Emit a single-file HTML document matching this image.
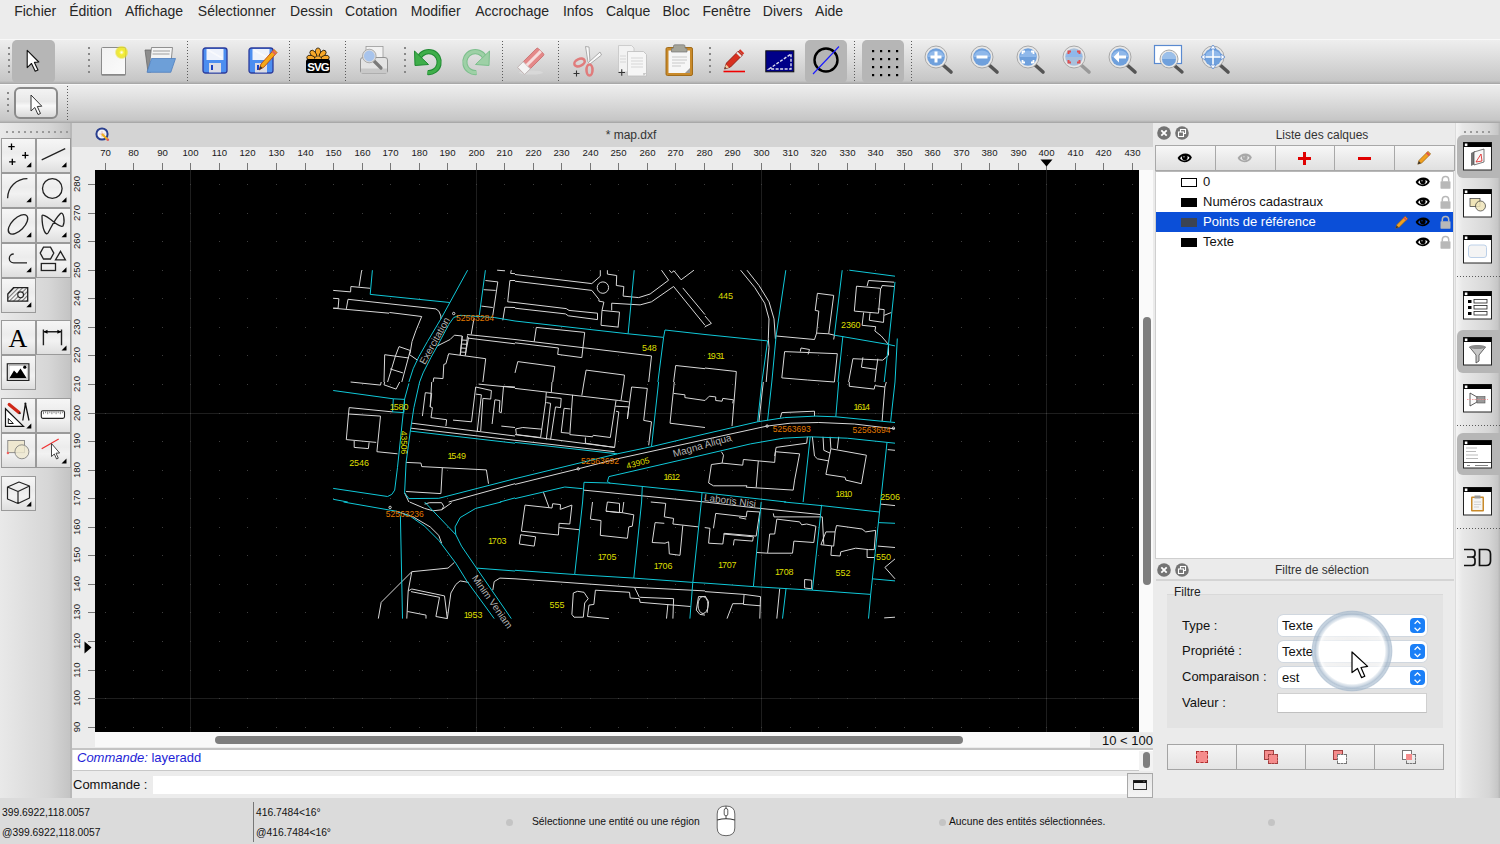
<!DOCTYPE html><html><head><meta charset='utf-8'><style>
*{margin:0;padding:0;box-sizing:border-box}
html,body{width:1500px;height:844px;overflow:hidden;background:#ececec;font-family:"Liberation Sans",sans-serif;color:#222;position:relative}
.a{position:absolute}
.t{position:absolute;white-space:nowrap}
.menu{font-size:14px;top:3px;color:#262626}
.tb{background:linear-gradient(#eeeeee,#e2e2e2 30%,#c6c6c6 95%,#b0b0b0)}
.sepv{position:absolute;width:1px;background:repeating-linear-gradient(#5a5a5a 0 1px,transparent 1px 3px)}
.seph{position:absolute;height:1px;background:repeating-linear-gradient(90deg,#5a5a5a 0 1px,transparent 1px 3px)}
.hdl{position:absolute;width:2px;background:repeating-linear-gradient(#888 0 2px,transparent 2px 6px)}
.hdlh{position:absolute;height:2px;background:repeating-linear-gradient(90deg,#999 0 2px,transparent 2px 6px)}
.chk{position:absolute;background:#b6b6b6;border-radius:5px}
.lb{position:absolute;width:35px;height:35px;border:1px solid #9a9a9a;background:linear-gradient(#f6f6f6,#ececec 40%,#f2f2f2 60%,#dedede)}
.rl{position:absolute;font-size:9.6px;color:#1a1a1a}
svg{position:absolute;overflow:visible}
</style></head><body>
<div class='t menu' style='left:14.2px'>Fichier</div>
<div class='t menu' style='left:69.2px'>Édition</div>
<div class='t menu' style='left:125.0px'>Affichage</div>
<div class='t menu' style='left:197.8px'>Sélectionner</div>
<div class='t menu' style='left:290.1px'>Dessin</div>
<div class='t menu' style='left:345.1px'>Cotation</div>
<div class='t menu' style='left:410.8px'>Modifier</div>
<div class='t menu' style='left:475.2px'>Accrochage</div>
<div class='t menu' style='left:562.9px'>Infos</div>
<div class='t menu' style='left:606.0px'>Calque</div>
<div class='t menu' style='left:662.5px'>Bloc</div>
<div class='t menu' style='left:702.5px'>Fenêtre</div>
<div class='t menu' style='left:762.8px'>Divers</div>
<div class='t menu' style='left:815.1px'>Aide</div>
<div class='a tb' style='left:0;top:39px;width:1500px;height:45px;border-top:1px solid #f8f8f8;border-bottom:1px solid #a9a9a9'></div>
<div class='a tb' style='left:0;top:84px;width:1500px;height:39px;border-top:1px solid #f8f8f8;border-bottom:1px solid #a9a9a9'></div>
<div class='hdl' style='left:8px;top:47px;height:30px'></div>
<div class='hdl' style='left:88px;top:47px;height:30px'></div>
<div class='hdl' style='left:404px;top:47px;height:30px'></div>
<div class='hdl' style='left:709px;top:47px;height:30px'></div>
<div class='sepv' style='left:187px;top:41px;height:40px'></div>
<div class='sepv' style='left:289px;top:41px;height:40px'></div>
<div class='sepv' style='left:345px;top:41px;height:40px'></div>
<div class='sepv' style='left:502px;top:41px;height:40px'></div>
<div class='sepv' style='left:558px;top:41px;height:40px'></div>
<div class='sepv' style='left:854px;top:41px;height:40px'></div>
<div class='sepv' style='left:911px;top:41px;height:40px'></div>
<div class='chk' style='left:12px;top:40px;width:43px;height:43px'></div>
<div class='chk' style='left:805px;top:40px;width:42px;height:43px'></div>
<div class='chk' style='left:862px;top:40px;width:42px;height:43px'></div>
<div class='hdl' style='left:7px;top:92px;height:22px'></div>
<div class='sepv' style='left:67px;top:86px;height:34px'></div>
<div class='a' style='left:14px;top:87px;width:44px;height:32px;border:2px solid #8a8a8a;border-radius:6px;background:linear-gradient(#f3f3f3,#e8e8e8 45%,#f8f8f8 60%,#d9d9d9)'></div>
<svg style='left:20px;top:46px' width='24' height='30' viewBox='0 0 24 30'><path d='M7.2,4.4 L7.2,21.6 L11.5,17.5 L15.2,25.2 L18,24 L14.4,16.4 L18.8,16 Z' fill='#fff' stroke='#111' stroke-width='1.1' stroke-linejoin='round'/></svg><svg style='left:98px;top:44px' width='34' height='36' viewBox='0 0 34 36'><defs><radialGradient id='gl'><stop offset='0' stop-color='#fff'/><stop offset='.35' stop-color='#f4ee30'/><stop offset='.75' stop-color='#e8e020' stop-opacity='.8'/><stop offset='1' stop-color='#e8e020' stop-opacity='0'/></radialGradient><linearGradient id='pg' x1='0' y1='0' x2='1' y2='1'><stop offset='0' stop-color='#f2f2f2'/><stop offset='1' stop-color='#fbfbfb'/></linearGradient></defs><rect x='3.5' y='3.5' width='24' height='27.5' rx='1' fill='url(#pg)' stroke='#8c8c8c' stroke-width='1'/><rect x='3.5' y='30' width='24' height='1.5' fill='#888'/><circle cx='23.6' cy='8.4' r='7' fill='url(#gl)'/></svg><svg style='left:142px;top:44px' width='38' height='32' viewBox='0 0 38 32'><path d='M3,6 L9,6 L9,28 L6,28 Z' fill='#8d8d8d' stroke='#6a6a6a' stroke-width='.8'/><path d='M9.5,3.5 L30.5,3.5 L29,18 L7,26Z' fill='#f4f4f4' stroke='#777' stroke-width='.8'/><path d='M11,7 L28,7 M10.5,10 L27.5,10' stroke='#bbb' stroke-width='1.5'/><path d='M9.5,14.5 L33.5,14.5 L28.8,28.3 L5,28.3 Z' fill='#6d9fd8' stroke='#4f7fbf' stroke-width='.8'/></svg><svg style='left:202px;top:47px' width='26' height='28' viewBox='0 0 26 28'><rect x='1' y='1' width='24' height='25' rx='2.5' fill='#4c8ef0' stroke='#2c3c9c' stroke-width='1.3'/><rect x='4.5' y='2' width='17' height='11' fill='#eef2fb'/><path d='M6,3 L20,11' stroke='#fff' stroke-width='2' opacity='.6'/><rect x='7' y='16' width='12' height='9.5' fill='#dcdce4'/><rect x='9' y='18' width='2' height='5' fill='#1a40c0'/></svg><svg style='left:248px;top:47px' width='30' height='28' viewBox='0 0 30 28'><rect x='1' y='1' width='24' height='25' rx='2.5' fill='#4c8ef0' stroke='#2c3c9c' stroke-width='1.3'/><rect x='4.5' y='2' width='17' height='11' fill='#eef2fb'/><path d='M6,3 L20,11' stroke='#fff' stroke-width='2' opacity='.6'/><rect x='7' y='16' width='12' height='9.5' fill='#dcdce4'/><rect x='9' y='18' width='2' height='5' fill='#1a40c0'/><path d='M11,23 L13,17 L26,2.5 L29,5.5 L16,20 Z' fill='#f4a818' stroke='#c04a10' stroke-width='.9'/><path d='M24.5,4 L27.5,7' stroke='#e06060' stroke-width='2.2'/><path d='M11,23 L12.3,19 L14.6,21Z' fill='#333'/></svg><svg style='left:304px;top:47px' width='28' height='27' viewBox='0 0 28 27'><ellipse cx='14' cy='5.2' rx='2.6' ry='4.2' transform='rotate(0 14 12.5)' fill='#f7a82a' stroke='#000' stroke-width='.7'/><ellipse cx='14' cy='5.2' rx='2.6' ry='4.2' transform='rotate(40 14 12.5)' fill='#f7a82a' stroke='#000' stroke-width='.7'/><ellipse cx='14' cy='5.2' rx='2.6' ry='4.2' transform='rotate(-40 14 12.5)' fill='#f7a82a' stroke='#000' stroke-width='.7'/><ellipse cx='14' cy='5.2' rx='2.6' ry='4.2' transform='rotate(78 14 12.5)' fill='#f7a82a' stroke='#000' stroke-width='.7'/><ellipse cx='14' cy='5.2' rx='2.6' ry='4.2' transform='rotate(-78 14 12.5)' fill='#f7a82a' stroke='#000' stroke-width='.7'/><circle cx='14' cy='12.5' r='3' fill='#f7a82a'/><rect x='2' y='12' width='24' height='14' rx='2.5' fill='#000'/><text x='14' y='23.6' text-anchor='middle' font-family='Liberation Sans' font-weight='bold' font-size='11.5' fill='#fff' letter-spacing='-.9' transform='scale(1 1)'>SVG</text></svg><svg style='left:358px;top:44px' width='32' height='32' viewBox='0 0 32 32'><rect x='8' y='2.5' width='17' height='13' fill='#f2f2f2' stroke='#9a9a9a' stroke-width='.8'/><path d='M2.5,16 Q2.5,13.5 5,13.5 L27,13.5 Q29.5,13.5 29.5,16 L29.5,27 Q29.5,29 27.5,29 L4.5,29 Q2.5,29 2.5,27Z' fill='#e4e4e4' stroke='#8a8a8a' stroke-width='.9'/><rect x='3' y='24.5' width='26' height='4.5' fill='#c8c8c8'/><path d='M15,16 L23,24' stroke='#7a7a7a' stroke-width='3.2' stroke-linecap='round'/><circle cx='11.3' cy='12' r='6.2' fill='#a8c4ec' stroke='#dcdcdc' stroke-width='1.6'/><circle cx='11.3' cy='12' r='6.8' fill='none' stroke='#8a8a8a' stroke-width='.6'/></svg><svg style='left:413px;top:46px' width='32' height='30' viewBox='0 0 32 30'><path d='M6.5,11 A10.5,10.5 0 1 1 14.5,26.5' fill='none' stroke='#1f8a32' stroke-width='5.2'/><path d='M6.5,11 A10.5,10.5 0 1 1 14.5,26.5' fill='none' stroke='#3fae4a' stroke-width='3.2'/><path d='M1.5,5 L2,19.5 L15.5,18.5 Z' fill='#3fae4a' stroke='#1f8a32' stroke-width='1'/></svg><svg style='left:460px;top:46px' width='32' height='30' viewBox='0 0 32 30'><g transform='translate(31,0) scale(-1,1)'><path d='M6.5,11 A10.5,10.5 0 1 1 14.5,26.5' fill='none' stroke='#7cbf8c' stroke-width='5.2'/><path d='M6.5,11 A10.5,10.5 0 1 1 14.5,26.5' fill='none' stroke='#9ed0a6' stroke-width='3.2'/><path d='M1.5,5 L2,19.5 L15.5,18.5 Z' fill='#9ed0a6' stroke='#7cbf8c' stroke-width='1'/></g></svg><svg style='left:514px;top:46px' width='34' height='32' viewBox='0 0 34 32'><ellipse cx='17' cy='26.5' rx='12' ry='2' fill='#d8d8d8'/><g transform='rotate(-45 17 15)'><rect x='3' y='10' width='28' height='10' rx='1.5' fill='#e48888' stroke='#c86a6a' stroke-width='.8'/><rect x='3' y='10' width='8' height='10' fill='#f4f4f4' stroke='#bbb' stroke-width='.8'/><rect x='11' y='13.5' width='20' height='3' fill='#f6dcdc'/></g></svg><svg style='left:570px;top:44px' width='34' height='34' viewBox='0 0 34 34'><path d='M18,18 L15.5,2.5 L19,3 L20,18' fill='#fafafa' stroke='#9a9a9a' stroke-width='.8'/><path d='M18,19 L30,8 L31.5,11 L20,20' fill='#fafafa' stroke='#9a9a9a' stroke-width='.8'/><ellipse cx='9.5' cy='18.5' rx='5.5' ry='3.5' fill='none' stroke='#e07c7c' stroke-width='2.6' transform='rotate(-25 9.5 18.5)'/><ellipse cx='19.5' cy='26' rx='3' ry='5.5' fill='none' stroke='#e07c7c' stroke-width='2.6'/><path d='M3.5,29.5 H9.5 M6.5,26.5 V32.5' stroke='#333' stroke-width='1.1'/></svg><svg style='left:616px;top:44px' width='34' height='34' viewBox='0 0 34 34'><path d='M2.5,1.5 H15.5 L18,4 V28 H2.5Z' fill='#f2f2f2' stroke='#c4c4c4' stroke-width='.8'/><path d='M11.5,7.5 H27.5 L30.5,10.5 V32 L27.5,32 H11.5Z' fill='#f6f6f6' stroke='#bdbdbd' stroke-width='.8'/><path d='M15,14 H27 M15,17 H27 M15,20 H27 M15,23 H27' stroke='#d6d6d6' stroke-width='1'/><path d='M4,12 H10 M4,15 H10 M4,18 H10' stroke='#d6d6d6' stroke-width='1'/><path d='M27.5,32 L30.5,29 L27,29Z' fill='#c8c8c8'/><path d='M2.5,28.5 H9 M5.75,25.25 V31.75' stroke='#333' stroke-width='1.1'/></svg><svg style='left:664px;top:44px' width='30' height='34' viewBox='0 0 30 34'><rect x='2' y='3.5' width='26.5' height='28' rx='1.5' fill='#c98a2a' stroke='#9c6410' stroke-width='.9'/><path d='M4.5,6.5 H26 V29 H4.5Z' fill='#f6f6f6'/><path d='M8,13 H23 M8,16 H23 M8,19 H21 M8,22 H17' stroke='#c8c8c8' stroke-width='1'/><path d='M21,29 L26,24 L26,29Z' fill='#9a9a9a'/><path d='M9.5,2 Q9.5,0.8 11,0.8 H19.5 Q21,0.8 21,2 V4 L23,4.5 V8 H7.5 V4.5 L9.5,4Z' fill='#a4a49a' stroke='#777' stroke-width='.7'/></svg><svg style='left:720px;top:48px' width='28' height='28' viewBox='0 0 28 28'><path d='M3.5,23.5 H25' stroke='#f00000' stroke-width='1.6'/><path d='M4.5,21 L6.5,15 L18.5,3 L22.5,7 L10.5,19 Z' fill='#d83020' stroke='#8a1a10' stroke-width='.9'/><path d='M17,4.5 L21,8.5' stroke='#e8e8e8' stroke-width='2'/><path d='M19.5,2 L23.5,6' stroke='#d83020' stroke-width='2'/><path d='M4.5,21 L6,16.5 L9,19.5Z' fill='#f0d0a0'/><path d='M4.5,21 L5.2,19 L6.5,20.3Z' fill='#222'/></svg><svg style='left:765px;top:50px' width='30' height='23' viewBox='0 0 30 23'><rect x='0.8' y='0.8' width='28' height='21' fill='#000088' stroke='#111' stroke-width='1'/><path d='M4,19 L26,4 L26,19 Z' fill='none' stroke='#e0e0f0' stroke-width='1.4' stroke-dasharray='3,1.5'/></svg><svg style='left:810px;top:44px' width='32' height='32' viewBox='0 0 32 32'><circle cx='16' cy='16' r='11.5' fill='none' stroke='#000' stroke-width='2.4'/><path d='M3,30 L29,2.5' stroke='#1a1aff' stroke-width='1.1'/></svg><svg style='left:870px;top:48px' width='30' height='30' viewBox='0 0 30 30'><rect x='2' y='2' width='2.2' height='2.2' fill='#000'/><rect x='2' y='10' width='2.2' height='2.2' fill='#000'/><rect x='2' y='18' width='2.2' height='2.2' fill='#000'/><rect x='2' y='26' width='2.2' height='2.2' fill='#000'/><rect x='10' y='2' width='2.2' height='2.2' fill='#000'/><rect x='10' y='10' width='2.2' height='2.2' fill='#000'/><rect x='10' y='18' width='2.2' height='2.2' fill='#000'/><rect x='10' y='26' width='2.2' height='2.2' fill='#000'/><rect x='18' y='2' width='2.2' height='2.2' fill='#000'/><rect x='18' y='10' width='2.2' height='2.2' fill='#000'/><rect x='18' y='18' width='2.2' height='2.2' fill='#000'/><rect x='18' y='26' width='2.2' height='2.2' fill='#000'/><rect x='26' y='2' width='2.2' height='2.2' fill='#000'/><rect x='26' y='10' width='2.2' height='2.2' fill='#000'/><rect x='26' y='18' width='2.2' height='2.2' fill='#000'/><rect x='26' y='26' width='2.2' height='2.2' fill='#000'/></svg><svg style='left:0px;top:0px' width='1500' height='100' viewBox='0 0 1500 100'><g><path d='M942,64 L951,72' stroke='#555' stroke-width='3.6' stroke-linecap='round'/><circle cx='936' cy='57' r='11' fill='#e8e8e8' stroke='#a8a8a8' stroke-width='1'/><circle cx='936' cy='57' r='8.8' fill='#6fa0dc'/><path d='M927.5,57 A8.8,8.8 0 0 1 944.5,57' fill='#8fb8ea'/><path d='M930.5,57 H941.5 M936,51.5 V62.5' stroke='#fff' stroke-width='3'/></g><g><path d='M988,64 L997,72' stroke='#555' stroke-width='3.6' stroke-linecap='round'/><circle cx='982' cy='57' r='11' fill='#e8e8e8' stroke='#a8a8a8' stroke-width='1'/><circle cx='982' cy='57' r='8.8' fill='#6fa0dc'/><path d='M973.5,57 A8.8,8.8 0 0 1 990.5,57' fill='#8fb8ea'/><path d='M976.5,57 H987.5' stroke='#fff' stroke-width='3'/></g><g><path d='M1034,64 L1043,72' stroke='#555' stroke-width='3.6' stroke-linecap='round'/><circle cx='1028' cy='57' r='11' fill='#e8e8e8' stroke='#a8a8a8' stroke-width='1'/><circle cx='1028' cy='57' r='8.8' fill='#6fa0dc'/><path d='M1019.5,57 A8.8,8.8 0 0 1 1036.5,57' fill='#8fb8ea'/><path d='M1022.5,54 V51.5 H1025 M1031,51.5 H1033.5 V54 M1033.5,60 V62.5 H1031 M1025,62.5 H1022.5 V60' fill='none' stroke='#fff' stroke-width='1.8'/></g><g><path d='M1080,64 L1089,72' stroke='#999' stroke-width='3.6' stroke-linecap='round'/><circle cx='1074' cy='57' r='11' fill='#e8e8e8' stroke='#a8a8a8' stroke-width='1'/><circle cx='1074' cy='57' r='8.8' fill='#a8c0dc'/><path d='M1065.5,57 A8.8,8.8 0 0 1 1082.5,57' fill='#8fb8ea'/><path d='M1068.5,54 V51.5 H1071 M1077,51.5 H1079.5 V54 M1079.5,60 V62.5 H1077 M1071,62.5 H1068.5 V60' fill='none' stroke='#e05050' stroke-width='2'/></g><g><path d='M1126,64 L1135,72' stroke='#555' stroke-width='3.6' stroke-linecap='round'/><circle cx='1120' cy='57' r='11' fill='#e8e8e8' stroke='#a8a8a8' stroke-width='1'/><circle cx='1120' cy='57' r='8.8' fill='#6fa0dc'/><path d='M1111.5,57 A8.8,8.8 0 0 1 1128.5,57' fill='#8fb8ea'/><path d='M1126,57 H1118' stroke='#fff' stroke-width='3'/><path d='M1113.5,57 L1119,51.5 L1119,62.5Z' fill='#fff'/></g><rect x='1154.5' y='45.5' width='27' height='18' fill='#fff' stroke='#5a8ad0' stroke-width='1.2'/><path d='M1175,66 L1182,72' stroke='#555' stroke-width='3.4' stroke-linecap='round'/><circle cx='1169' cy='59' r='9' fill='#e8e8e8' stroke='#a8a8a8' stroke-width='1'/><circle cx='1169' cy='59' r='7' fill='#6fa0dc'/><path d='M1162,59 A7,7 0 0 1 1176,59' fill='#9cc0ea'/><g><path d='M1219,64 L1228,72' stroke='#555' stroke-width='3.6' stroke-linecap='round'/><circle cx='1213' cy='57' r='11' fill='#e8e8e8' stroke='#a8a8a8' stroke-width='1'/><circle cx='1213' cy='57' r='8.8' fill='#6fa0dc'/><path d='M1204.5,57 A8.8,8.8 0 0 1 1221.5,57' fill='#8fb8ea'/><path d='M1204,57 H1222 M1213,48 V66' stroke='#fff' stroke-width='1.6'/><path d='M1213,45 L1210,49 H1216Z M1213,69 L1210,65 H1216Z M1201,57 L1205,54 V60Z M1225,57 L1221,54 V60Z' fill='#fff' stroke='#5a8ad0' stroke-width='.8'/></g></svg><svg style='left:26px;top:92px' width='20' height='26' viewBox='0 0 20 26'><path d='M5,3 L5,19 L8.8,15.5 L12,22.5 L14.5,21.5 L11.3,14.5 L15.8,14.2 Z' fill='#fff' stroke='#333' stroke-width='1' stroke-linejoin='round'/></svg>
<div class='a' style='left:0;top:123px;width:72px;height:675px;background:linear-gradient(90deg,#e9e9e9,#d6d6d6 70%,#c4c4c4);border-right:2px solid #b8b8b8'></div>
<div class='hdlh' style='left:6px;top:131px;width:62px'></div>
<div class='lb' style='left:1px;top:138px'></div>
<div class='lb' style='left:36px;top:138px'></div>
<div class='lb' style='left:1px;top:173px'></div>
<div class='lb' style='left:36px;top:173px'></div>
<div class='lb' style='left:1px;top:208px'></div>
<div class='lb' style='left:36px;top:208px'></div>
<div class='lb' style='left:1px;top:243px'></div>
<div class='lb' style='left:36px;top:243px'></div>
<div class='lb' style='left:1px;top:278px'></div>
<div class='lb' style='left:1px;top:320px'></div>
<div class='lb' style='left:36px;top:320px'></div>
<div class='lb' style='left:1px;top:355px'></div>
<div class='lb' style='left:1px;top:398px'></div>
<div class='lb' style='left:36px;top:398px'></div>
<div class='lb' style='left:1px;top:433px'></div>
<div class='lb' style='left:36px;top:433px'></div>
<div class='lb' style='left:1px;top:476px'></div>
<svg style='left:0px;top:0px' width='80' height='520' viewBox='0 0 80 520'><path d='M8.3,146.7 H14.7 M11.5,143.5 V149.89999999999998' stroke='#000' stroke-width='1.3'/><path d='M22.1,155.3 H28.5 M25.3,152.10000000000002 V158.5' stroke='#000' stroke-width='1.3'/><path d='M9.100000000000001,161.9 H15.5 M12.3,158.70000000000002 V165.1' stroke='#000' stroke-width='1.3'/><path d='M41.7,159.8 L65.2,148.7' stroke='#222' stroke-width='1.3'/><path d='M7.6,198.2 A19.8,19.8 0 0 1 27.4,178.6' stroke='#222' fill='none' stroke-width='1.3'/><circle cx='52.3' cy='188.5' r='9.8' stroke='#222' fill='none' stroke-width='1.3'/><ellipse cx='18' cy='224.3' rx='12.3' ry='6.2' transform='rotate(-45 18 224.3)' stroke='#222' fill='none' stroke-width='1.3'/><path d='M42,216 C42,230 46,236 48,233 C51,228 54,220 60,214 C64,210 65,222 63,226 C60,228 54,222 50,219 C46,216 42,214 42,216Z' stroke='#222' fill='none' stroke-width='1.3'/><path d='M13.7,254 A4.3,4.3 0 0 0 13.7,262.8 H27' stroke='#222' fill='none' stroke-width='1.3'/><path d='M43.5,247.2 H50.5 L53.8,253.1 L50.5,259 H43.5 L40.2,253.1 Z' stroke='#222' fill='none' stroke-width='1.3'/><path d='M55.5,259.9 H65.4 L60.5,251.4 Z' stroke='#222' fill='none' stroke-width='1.3'/><rect x='41.3' y='263.5' width='14.2' height='7' stroke='#222' fill='none' stroke-width='1.3'/><defs><pattern id='hp' width='3' height='3' patternUnits='userSpaceOnUse' patternTransform='rotate(45)'><rect width='1' height='3' fill='#777'/></pattern></defs><path d='M7.8,294 L13.5,287.7 H27.7 V301.2 H7.8 Z' fill='url(#hp)' stroke='#222' stroke-width='1.3'/><circle cx='20.6' cy='294.8' r='2.9' fill='#f0f0f0' stroke='#222' stroke-width='1.1'/><text x='17.8' y='346.8' text-anchor='middle' font-family='Liberation Serif' font-size='26' fill='#000'>A</text><path d='M43.4,329.5 V345.3 M61.5,329.5 V345.3 M43.4,331.8 H61.5' stroke='#222' stroke-width='1.4'/><path d='M43.6,331.8 L47.5,329.8 V333.8Z M61.3,331.8 L57.4,329.8 V333.8Z' fill='#000'/><rect x='7.3' y='363.8' width='21.6' height='16.6' fill='#fff' stroke='#222' stroke-width='1.2'/><rect x='9' y='365.5' width='18.2' height='13.2' fill='none' stroke='#999' stroke-width='.6'/><path d='M9.5,378 L14,370.5 L17,373.5 L20.5,368.5 L26.5,378Z' fill='#000'/><circle cx='24.8' cy='367.2' r='1.6' fill='#000'/><path d='M5.5,408.7 V426.3 H23.5 Z' fill='#fff' stroke='#111' stroke-width='1.2'/><path d='M8.3,418.5 V423.5 H13.3Z' fill='none' stroke='#111' stroke-width='1'/><path d='M9.2,404.5 L19,412.5' stroke='#d02818' stroke-width='3.2' stroke-linecap='round'/><path d='M19,412.5 L20.5,413.8' stroke='#222' stroke-width='1.5'/><path d='M22.8,420.5 L25.4,403.5 L29,420.5' fill='none' stroke='#111' stroke-width='1.3'/><circle cx='25.4' cy='403.5' r='1' fill='#111'/><rect x='41.3' y='410.8' width='23.2' height='7.6' rx='1.6' fill='#fff' stroke='#222' stroke-width='1.1'/><path d='M43.5,411.5 V414.2M45.6,411.5 V413.2M47.7,411.5 V414.2M49.8,411.5 V413.2M51.9,411.5 V414.2M54.0,411.5 V413.2M56.1,411.5 V414.2M58.2,411.5 V413.2M60.3,411.5 V414.2M62.4,411.5 V413.2' stroke='#333' stroke-width='.6'/><rect x='7.8' y='440.4' width='16.7' height='12.3' fill='#efe8d0' stroke='#777' stroke-width='.8'/><circle cx='21.9' cy='451.8' r='7' fill='#efe8d0' fill-opacity='.8' stroke='#777' stroke-width='.8'/><circle cx='7.9' cy='453' r='1.2' fill='#f06060'/><path d='M41.7,448.8 L58.7,439' stroke='#f03030' stroke-width='1.2'/><path d='M51.5,443.5 V456.5 L54.3,454 L56.6,459 L58.3,458.2 L56,453.2 L59.6,453 Z' fill='#fff' stroke='#333' stroke-width='.9' stroke-linejoin='round'/><path d='M7.5,487 L19,482 L29.5,486 L29.5,498 L18,503.5 L7.5,499 Z M7.5,487 L18,491.5 L29.5,486 M18,491.5 V503.5' fill='none' stroke='#222' stroke-width='1.2' stroke-linejoin='round'/><path d='M26.3,167.3 L31.3,162.3 L31.3,167.3Z' fill='#000'/><path d='M61.5,167.3 L66.5,162.3 L66.5,167.3Z' fill='#000'/><path d='M26.3,202.3 L31.3,197.3 L31.3,202.3Z' fill='#000'/><path d='M61.5,202.3 L66.5,197.3 L66.5,202.3Z' fill='#000'/><path d='M26.3,237.3 L31.3,232.3 L31.3,237.3Z' fill='#000'/><path d='M61.5,237.3 L66.5,232.3 L66.5,237.3Z' fill='#000'/><path d='M26.3,272.3 L31.3,267.3 L31.3,272.3Z' fill='#000'/><path d='M61.5,272.3 L66.5,267.3 L66.5,272.3Z' fill='#000'/><path d='M26.3,307.3 L31.3,302.3 L31.3,307.3Z' fill='#000'/><path d='M61.5,350.5 L66.5,345.5 L66.5,350.5Z' fill='#000'/><path d='M26.3,428.5 L31.3,423.5 L31.3,428.5Z' fill='#000'/><path d='M61.5,463.5 L66.5,458.5 L66.5,463.5Z' fill='#000'/><path d='M26.3,506.5 L31.3,501.5 L31.3,506.5Z' fill='#000'/></svg>
<div class='a' style='left:72px;top:123px;width:1081px;height:24px;background:#d4d4d4'></div>
<svg style='left:95px;top:127px' width='15' height='15' viewBox='0 0 15 15'><circle cx='7' cy='7' r='5.6' fill='#f4f4f4' stroke='#2a3f8f' stroke-width='2'/><path d='M4,7 H10 M7,4 V10' stroke='#d88' stroke-width='.5'/><path d='M7,7 L12.5,12.5' stroke='#f0b020' stroke-width='2.2'/><circle cx='12.8' cy='12.8' r='1.3' fill='#e06060'/></svg>
<div class='t' style='left:72px;width:1118px;top:128px;text-align:center;font-size:12px;color:#333'>* map.dxf</div>
<div class='a' style='left:72px;top:147px;width:1081px;height:601px;background:#ececec'></div>
<div class='a' style='left:95px;top:170px;width:1044px;height:562px;background:#000'></div>
<svg class='a' style='left:0;top:0' width='1500' height='844' viewBox='0 0 1500 844'><defs><clipPath id='cv'><rect x='95' y='170' width='1044' height='562'/></clipPath></defs><g clip-path='url(#cv)'><line x1='190.5' y1='170' x2='190.5' y2='732' stroke='#1e1e1e' stroke-width='1'/><line x1='476.5' y1='170' x2='476.5' y2='732' stroke='#1e1e1e' stroke-width='1'/><line x1='761.5' y1='170' x2='761.5' y2='732' stroke='#1e1e1e' stroke-width='1'/><line x1='1046.5' y1='170' x2='1046.5' y2='732' stroke='#1e1e1e' stroke-width='1'/><line x1='95' y1='698.5' x2='1139' y2='698.5' stroke='#1e1e1e' stroke-width='1'/><line x1='95' y1='413.5' x2='1139' y2='413.5' stroke='#1e1e1e' stroke-width='1'/><path d='M105,727h1v1h-1zM105,698h1v1h-1zM105,670h1v1h-1zM105,641h1v1h-1zM105,612h1v1h-1zM105,584h1v1h-1zM105,555h1v1h-1zM105,527h1v1h-1zM105,498h1v1h-1zM105,470h1v1h-1zM105,441h1v1h-1zM105,413h1v1h-1zM105,384h1v1h-1zM105,355h1v1h-1zM105,327h1v1h-1zM105,298h1v1h-1zM105,270h1v1h-1zM105,241h1v1h-1zM105,213h1v1h-1zM105,184h1v1h-1zM133,727h1v1h-1zM133,698h1v1h-1zM133,670h1v1h-1zM133,641h1v1h-1zM133,612h1v1h-1zM133,584h1v1h-1zM133,555h1v1h-1zM133,527h1v1h-1zM133,498h1v1h-1zM133,470h1v1h-1zM133,441h1v1h-1zM133,413h1v1h-1zM133,384h1v1h-1zM133,355h1v1h-1zM133,327h1v1h-1zM133,298h1v1h-1zM133,270h1v1h-1zM133,241h1v1h-1zM133,213h1v1h-1zM133,184h1v1h-1zM162,727h1v1h-1zM162,698h1v1h-1zM162,670h1v1h-1zM162,641h1v1h-1zM162,612h1v1h-1zM162,584h1v1h-1zM162,555h1v1h-1zM162,527h1v1h-1zM162,498h1v1h-1zM162,470h1v1h-1zM162,441h1v1h-1zM162,413h1v1h-1zM162,384h1v1h-1zM162,355h1v1h-1zM162,327h1v1h-1zM162,298h1v1h-1zM162,270h1v1h-1zM162,241h1v1h-1zM162,213h1v1h-1zM162,184h1v1h-1zM190,727h1v1h-1zM190,698h1v1h-1zM190,670h1v1h-1zM190,641h1v1h-1zM190,612h1v1h-1zM190,584h1v1h-1zM190,555h1v1h-1zM190,527h1v1h-1zM190,498h1v1h-1zM190,470h1v1h-1zM190,441h1v1h-1zM190,413h1v1h-1zM190,384h1v1h-1zM190,355h1v1h-1zM190,327h1v1h-1zM190,298h1v1h-1zM190,270h1v1h-1zM190,241h1v1h-1zM190,213h1v1h-1zM190,184h1v1h-1zM219,727h1v1h-1zM219,698h1v1h-1zM219,670h1v1h-1zM219,641h1v1h-1zM219,612h1v1h-1zM219,584h1v1h-1zM219,555h1v1h-1zM219,527h1v1h-1zM219,498h1v1h-1zM219,470h1v1h-1zM219,441h1v1h-1zM219,413h1v1h-1zM219,384h1v1h-1zM219,355h1v1h-1zM219,327h1v1h-1zM219,298h1v1h-1zM219,270h1v1h-1zM219,241h1v1h-1zM219,213h1v1h-1zM219,184h1v1h-1zM247,727h1v1h-1zM247,698h1v1h-1zM247,670h1v1h-1zM247,641h1v1h-1zM247,612h1v1h-1zM247,584h1v1h-1zM247,555h1v1h-1zM247,527h1v1h-1zM247,498h1v1h-1zM247,470h1v1h-1zM247,441h1v1h-1zM247,413h1v1h-1zM247,384h1v1h-1zM247,355h1v1h-1zM247,327h1v1h-1zM247,298h1v1h-1zM247,270h1v1h-1zM247,241h1v1h-1zM247,213h1v1h-1zM247,184h1v1h-1zM276,727h1v1h-1zM276,698h1v1h-1zM276,670h1v1h-1zM276,641h1v1h-1zM276,612h1v1h-1zM276,584h1v1h-1zM276,555h1v1h-1zM276,527h1v1h-1zM276,498h1v1h-1zM276,470h1v1h-1zM276,441h1v1h-1zM276,413h1v1h-1zM276,384h1v1h-1zM276,355h1v1h-1zM276,327h1v1h-1zM276,298h1v1h-1zM276,270h1v1h-1zM276,241h1v1h-1zM276,213h1v1h-1zM276,184h1v1h-1zM305,727h1v1h-1zM305,698h1v1h-1zM305,670h1v1h-1zM305,641h1v1h-1zM305,612h1v1h-1zM305,584h1v1h-1zM305,555h1v1h-1zM305,527h1v1h-1zM305,498h1v1h-1zM305,470h1v1h-1zM305,441h1v1h-1zM305,413h1v1h-1zM305,384h1v1h-1zM305,355h1v1h-1zM305,327h1v1h-1zM305,298h1v1h-1zM305,270h1v1h-1zM305,241h1v1h-1zM305,213h1v1h-1zM305,184h1v1h-1zM333,727h1v1h-1zM333,698h1v1h-1zM333,670h1v1h-1zM333,641h1v1h-1zM333,612h1v1h-1zM333,584h1v1h-1zM333,555h1v1h-1zM333,527h1v1h-1zM333,498h1v1h-1zM333,470h1v1h-1zM333,441h1v1h-1zM333,413h1v1h-1zM333,384h1v1h-1zM333,355h1v1h-1zM333,327h1v1h-1zM333,298h1v1h-1zM333,270h1v1h-1zM333,241h1v1h-1zM333,213h1v1h-1zM333,184h1v1h-1zM362,727h1v1h-1zM362,698h1v1h-1zM362,670h1v1h-1zM362,641h1v1h-1zM362,612h1v1h-1zM362,584h1v1h-1zM362,555h1v1h-1zM362,527h1v1h-1zM362,498h1v1h-1zM362,470h1v1h-1zM362,441h1v1h-1zM362,413h1v1h-1zM362,384h1v1h-1zM362,355h1v1h-1zM362,327h1v1h-1zM362,298h1v1h-1zM362,270h1v1h-1zM362,241h1v1h-1zM362,213h1v1h-1zM362,184h1v1h-1zM390,727h1v1h-1zM390,698h1v1h-1zM390,670h1v1h-1zM390,641h1v1h-1zM390,612h1v1h-1zM390,584h1v1h-1zM390,555h1v1h-1zM390,527h1v1h-1zM390,498h1v1h-1zM390,470h1v1h-1zM390,441h1v1h-1zM390,413h1v1h-1zM390,384h1v1h-1zM390,355h1v1h-1zM390,327h1v1h-1zM390,298h1v1h-1zM390,270h1v1h-1zM390,241h1v1h-1zM390,213h1v1h-1zM390,184h1v1h-1zM419,727h1v1h-1zM419,698h1v1h-1zM419,670h1v1h-1zM419,641h1v1h-1zM419,612h1v1h-1zM419,584h1v1h-1zM419,555h1v1h-1zM419,527h1v1h-1zM419,498h1v1h-1zM419,470h1v1h-1zM419,441h1v1h-1zM419,413h1v1h-1zM419,384h1v1h-1zM419,355h1v1h-1zM419,327h1v1h-1zM419,298h1v1h-1zM419,270h1v1h-1zM419,241h1v1h-1zM419,213h1v1h-1zM419,184h1v1h-1zM447,727h1v1h-1zM447,698h1v1h-1zM447,670h1v1h-1zM447,641h1v1h-1zM447,612h1v1h-1zM447,584h1v1h-1zM447,555h1v1h-1zM447,527h1v1h-1zM447,498h1v1h-1zM447,470h1v1h-1zM447,441h1v1h-1zM447,413h1v1h-1zM447,384h1v1h-1zM447,355h1v1h-1zM447,327h1v1h-1zM447,298h1v1h-1zM447,270h1v1h-1zM447,241h1v1h-1zM447,213h1v1h-1zM447,184h1v1h-1zM476,727h1v1h-1zM476,698h1v1h-1zM476,670h1v1h-1zM476,641h1v1h-1zM476,612h1v1h-1zM476,584h1v1h-1zM476,555h1v1h-1zM476,527h1v1h-1zM476,498h1v1h-1zM476,470h1v1h-1zM476,441h1v1h-1zM476,413h1v1h-1zM476,384h1v1h-1zM476,355h1v1h-1zM476,327h1v1h-1zM476,298h1v1h-1zM476,270h1v1h-1zM476,241h1v1h-1zM476,213h1v1h-1zM476,184h1v1h-1zM504,727h1v1h-1zM504,698h1v1h-1zM504,670h1v1h-1zM504,641h1v1h-1zM504,612h1v1h-1zM504,584h1v1h-1zM504,555h1v1h-1zM504,527h1v1h-1zM504,498h1v1h-1zM504,470h1v1h-1zM504,441h1v1h-1zM504,413h1v1h-1zM504,384h1v1h-1zM504,355h1v1h-1zM504,327h1v1h-1zM504,298h1v1h-1zM504,270h1v1h-1zM504,241h1v1h-1zM504,213h1v1h-1zM504,184h1v1h-1zM533,727h1v1h-1zM533,698h1v1h-1zM533,670h1v1h-1zM533,641h1v1h-1zM533,612h1v1h-1zM533,584h1v1h-1zM533,555h1v1h-1zM533,527h1v1h-1zM533,498h1v1h-1zM533,470h1v1h-1zM533,441h1v1h-1zM533,413h1v1h-1zM533,384h1v1h-1zM533,355h1v1h-1zM533,327h1v1h-1zM533,298h1v1h-1zM533,270h1v1h-1zM533,241h1v1h-1zM533,213h1v1h-1zM533,184h1v1h-1zM561,727h1v1h-1zM561,698h1v1h-1zM561,670h1v1h-1zM561,641h1v1h-1zM561,612h1v1h-1zM561,584h1v1h-1zM561,555h1v1h-1zM561,527h1v1h-1zM561,498h1v1h-1zM561,470h1v1h-1zM561,441h1v1h-1zM561,413h1v1h-1zM561,384h1v1h-1zM561,355h1v1h-1zM561,327h1v1h-1zM561,298h1v1h-1zM561,270h1v1h-1zM561,241h1v1h-1zM561,213h1v1h-1zM561,184h1v1h-1zM590,727h1v1h-1zM590,698h1v1h-1zM590,670h1v1h-1zM590,641h1v1h-1zM590,612h1v1h-1zM590,584h1v1h-1zM590,555h1v1h-1zM590,527h1v1h-1zM590,498h1v1h-1zM590,470h1v1h-1zM590,441h1v1h-1zM590,413h1v1h-1zM590,384h1v1h-1zM590,355h1v1h-1zM590,327h1v1h-1zM590,298h1v1h-1zM590,270h1v1h-1zM590,241h1v1h-1zM590,213h1v1h-1zM590,184h1v1h-1zM618,727h1v1h-1zM618,698h1v1h-1zM618,670h1v1h-1zM618,641h1v1h-1zM618,612h1v1h-1zM618,584h1v1h-1zM618,555h1v1h-1zM618,527h1v1h-1zM618,498h1v1h-1zM618,470h1v1h-1zM618,441h1v1h-1zM618,413h1v1h-1zM618,384h1v1h-1zM618,355h1v1h-1zM618,327h1v1h-1zM618,298h1v1h-1zM618,270h1v1h-1zM618,241h1v1h-1zM618,213h1v1h-1zM618,184h1v1h-1zM647,727h1v1h-1zM647,698h1v1h-1zM647,670h1v1h-1zM647,641h1v1h-1zM647,612h1v1h-1zM647,584h1v1h-1zM647,555h1v1h-1zM647,527h1v1h-1zM647,498h1v1h-1zM647,470h1v1h-1zM647,441h1v1h-1zM647,413h1v1h-1zM647,384h1v1h-1zM647,355h1v1h-1zM647,327h1v1h-1zM647,298h1v1h-1zM647,270h1v1h-1zM647,241h1v1h-1zM647,213h1v1h-1zM647,184h1v1h-1zM675,727h1v1h-1zM675,698h1v1h-1zM675,670h1v1h-1zM675,641h1v1h-1zM675,612h1v1h-1zM675,584h1v1h-1zM675,555h1v1h-1zM675,527h1v1h-1zM675,498h1v1h-1zM675,470h1v1h-1zM675,441h1v1h-1zM675,413h1v1h-1zM675,384h1v1h-1zM675,355h1v1h-1zM675,327h1v1h-1zM675,298h1v1h-1zM675,270h1v1h-1zM675,241h1v1h-1zM675,213h1v1h-1zM675,184h1v1h-1zM704,727h1v1h-1zM704,698h1v1h-1zM704,670h1v1h-1zM704,641h1v1h-1zM704,612h1v1h-1zM704,584h1v1h-1zM704,555h1v1h-1zM704,527h1v1h-1zM704,498h1v1h-1zM704,470h1v1h-1zM704,441h1v1h-1zM704,413h1v1h-1zM704,384h1v1h-1zM704,355h1v1h-1zM704,327h1v1h-1zM704,298h1v1h-1zM704,270h1v1h-1zM704,241h1v1h-1zM704,213h1v1h-1zM704,184h1v1h-1zM732,727h1v1h-1zM732,698h1v1h-1zM732,670h1v1h-1zM732,641h1v1h-1zM732,612h1v1h-1zM732,584h1v1h-1zM732,555h1v1h-1zM732,527h1v1h-1zM732,498h1v1h-1zM732,470h1v1h-1zM732,441h1v1h-1zM732,413h1v1h-1zM732,384h1v1h-1zM732,355h1v1h-1zM732,327h1v1h-1zM732,298h1v1h-1zM732,270h1v1h-1zM732,241h1v1h-1zM732,213h1v1h-1zM732,184h1v1h-1zM761,727h1v1h-1zM761,698h1v1h-1zM761,670h1v1h-1zM761,641h1v1h-1zM761,612h1v1h-1zM761,584h1v1h-1zM761,555h1v1h-1zM761,527h1v1h-1zM761,498h1v1h-1zM761,470h1v1h-1zM761,441h1v1h-1zM761,413h1v1h-1zM761,384h1v1h-1zM761,355h1v1h-1zM761,327h1v1h-1zM761,298h1v1h-1zM761,270h1v1h-1zM761,241h1v1h-1zM761,213h1v1h-1zM761,184h1v1h-1zM790,727h1v1h-1zM790,698h1v1h-1zM790,670h1v1h-1zM790,641h1v1h-1zM790,612h1v1h-1zM790,584h1v1h-1zM790,555h1v1h-1zM790,527h1v1h-1zM790,498h1v1h-1zM790,470h1v1h-1zM790,441h1v1h-1zM790,413h1v1h-1zM790,384h1v1h-1zM790,355h1v1h-1zM790,327h1v1h-1zM790,298h1v1h-1zM790,270h1v1h-1zM790,241h1v1h-1zM790,213h1v1h-1zM790,184h1v1h-1zM818,727h1v1h-1zM818,698h1v1h-1zM818,670h1v1h-1zM818,641h1v1h-1zM818,612h1v1h-1zM818,584h1v1h-1zM818,555h1v1h-1zM818,527h1v1h-1zM818,498h1v1h-1zM818,470h1v1h-1zM818,441h1v1h-1zM818,413h1v1h-1zM818,384h1v1h-1zM818,355h1v1h-1zM818,327h1v1h-1zM818,298h1v1h-1zM818,270h1v1h-1zM818,241h1v1h-1zM818,213h1v1h-1zM818,184h1v1h-1zM847,727h1v1h-1zM847,698h1v1h-1zM847,670h1v1h-1zM847,641h1v1h-1zM847,612h1v1h-1zM847,584h1v1h-1zM847,555h1v1h-1zM847,527h1v1h-1zM847,498h1v1h-1zM847,470h1v1h-1zM847,441h1v1h-1zM847,413h1v1h-1zM847,384h1v1h-1zM847,355h1v1h-1zM847,327h1v1h-1zM847,298h1v1h-1zM847,270h1v1h-1zM847,241h1v1h-1zM847,213h1v1h-1zM847,184h1v1h-1zM875,727h1v1h-1zM875,698h1v1h-1zM875,670h1v1h-1zM875,641h1v1h-1zM875,612h1v1h-1zM875,584h1v1h-1zM875,555h1v1h-1zM875,527h1v1h-1zM875,498h1v1h-1zM875,470h1v1h-1zM875,441h1v1h-1zM875,413h1v1h-1zM875,384h1v1h-1zM875,355h1v1h-1zM875,327h1v1h-1zM875,298h1v1h-1zM875,270h1v1h-1zM875,241h1v1h-1zM875,213h1v1h-1zM875,184h1v1h-1zM904,727h1v1h-1zM904,698h1v1h-1zM904,670h1v1h-1zM904,641h1v1h-1zM904,612h1v1h-1zM904,584h1v1h-1zM904,555h1v1h-1zM904,527h1v1h-1zM904,498h1v1h-1zM904,470h1v1h-1zM904,441h1v1h-1zM904,413h1v1h-1zM904,384h1v1h-1zM904,355h1v1h-1zM904,327h1v1h-1zM904,298h1v1h-1zM904,270h1v1h-1zM904,241h1v1h-1zM904,213h1v1h-1zM904,184h1v1h-1zM932,727h1v1h-1zM932,698h1v1h-1zM932,670h1v1h-1zM932,641h1v1h-1zM932,612h1v1h-1zM932,584h1v1h-1zM932,555h1v1h-1zM932,527h1v1h-1zM932,498h1v1h-1zM932,470h1v1h-1zM932,441h1v1h-1zM932,413h1v1h-1zM932,384h1v1h-1zM932,355h1v1h-1zM932,327h1v1h-1zM932,298h1v1h-1zM932,270h1v1h-1zM932,241h1v1h-1zM932,213h1v1h-1zM932,184h1v1h-1zM961,727h1v1h-1zM961,698h1v1h-1zM961,670h1v1h-1zM961,641h1v1h-1zM961,612h1v1h-1zM961,584h1v1h-1zM961,555h1v1h-1zM961,527h1v1h-1zM961,498h1v1h-1zM961,470h1v1h-1zM961,441h1v1h-1zM961,413h1v1h-1zM961,384h1v1h-1zM961,355h1v1h-1zM961,327h1v1h-1zM961,298h1v1h-1zM961,270h1v1h-1zM961,241h1v1h-1zM961,213h1v1h-1zM961,184h1v1h-1zM989,727h1v1h-1zM989,698h1v1h-1zM989,670h1v1h-1zM989,641h1v1h-1zM989,612h1v1h-1zM989,584h1v1h-1zM989,555h1v1h-1zM989,527h1v1h-1zM989,498h1v1h-1zM989,470h1v1h-1zM989,441h1v1h-1zM989,413h1v1h-1zM989,384h1v1h-1zM989,355h1v1h-1zM989,327h1v1h-1zM989,298h1v1h-1zM989,270h1v1h-1zM989,241h1v1h-1zM989,213h1v1h-1zM989,184h1v1h-1zM1018,727h1v1h-1zM1018,698h1v1h-1zM1018,670h1v1h-1zM1018,641h1v1h-1zM1018,612h1v1h-1zM1018,584h1v1h-1zM1018,555h1v1h-1zM1018,527h1v1h-1zM1018,498h1v1h-1zM1018,470h1v1h-1zM1018,441h1v1h-1zM1018,413h1v1h-1zM1018,384h1v1h-1zM1018,355h1v1h-1zM1018,327h1v1h-1zM1018,298h1v1h-1zM1018,270h1v1h-1zM1018,241h1v1h-1zM1018,213h1v1h-1zM1018,184h1v1h-1zM1046,727h1v1h-1zM1046,698h1v1h-1zM1046,670h1v1h-1zM1046,641h1v1h-1zM1046,612h1v1h-1zM1046,584h1v1h-1zM1046,555h1v1h-1zM1046,527h1v1h-1zM1046,498h1v1h-1zM1046,470h1v1h-1zM1046,441h1v1h-1zM1046,413h1v1h-1zM1046,384h1v1h-1zM1046,355h1v1h-1zM1046,327h1v1h-1zM1046,298h1v1h-1zM1046,270h1v1h-1zM1046,241h1v1h-1zM1046,213h1v1h-1zM1046,184h1v1h-1zM1075,727h1v1h-1zM1075,698h1v1h-1zM1075,670h1v1h-1zM1075,641h1v1h-1zM1075,612h1v1h-1zM1075,584h1v1h-1zM1075,555h1v1h-1zM1075,527h1v1h-1zM1075,498h1v1h-1zM1075,470h1v1h-1zM1075,441h1v1h-1zM1075,413h1v1h-1zM1075,384h1v1h-1zM1075,355h1v1h-1zM1075,327h1v1h-1zM1075,298h1v1h-1zM1075,270h1v1h-1zM1075,241h1v1h-1zM1075,213h1v1h-1zM1075,184h1v1h-1zM1103,727h1v1h-1zM1103,698h1v1h-1zM1103,670h1v1h-1zM1103,641h1v1h-1zM1103,612h1v1h-1zM1103,584h1v1h-1zM1103,555h1v1h-1zM1103,527h1v1h-1zM1103,498h1v1h-1zM1103,470h1v1h-1zM1103,441h1v1h-1zM1103,413h1v1h-1zM1103,384h1v1h-1zM1103,355h1v1h-1zM1103,327h1v1h-1zM1103,298h1v1h-1zM1103,270h1v1h-1zM1103,241h1v1h-1zM1103,213h1v1h-1zM1103,184h1v1h-1zM1132,727h1v1h-1zM1132,698h1v1h-1zM1132,670h1v1h-1zM1132,641h1v1h-1zM1132,612h1v1h-1zM1132,584h1v1h-1zM1132,555h1v1h-1zM1132,527h1v1h-1zM1132,498h1v1h-1zM1132,470h1v1h-1zM1132,441h1v1h-1zM1132,413h1v1h-1zM1132,384h1v1h-1zM1132,355h1v1h-1zM1132,327h1v1h-1zM1132,298h1v1h-1zM1132,270h1v1h-1zM1132,241h1v1h-1zM1132,213h1v1h-1zM1132,184h1v1h-1z' fill='#3e3e3e'/><g fill='none' stroke='#d8d8d8' stroke-width='1' stroke-linejoin='round'><polyline points='333.2,290.4 350.6,291.9 350.9,286.5 370.2,288.3'/><polyline points='361.7,270.2 359.1,286.5'/><polyline points='333.2,298.3 338.9,298.7 338.1,308.2 333.2,308.2'/><polyline points='333.2,308.2 389.0,313.2 389.7,312.5 421.7,316.5 416.0,330.3 412.0,341.6 410.0,353.7'/><polyline points='346.3,308.9 348.0,299.3 435.9,308.9 438.8,311.1 440.9,316.0 440.9,318.9'/><polyline points='384.0,382.0 384.7,354.7 408.9,358.0'/><polyline points='395.4,356.1 399.0,346.6 410.3,350.5 401.8,382.0'/><polyline points='395.4,356.1 387.6,382.0'/><polyline points='390.1,368.9 402.9,372.9'/><polyline points='408.9,354.2 417.4,360.1'/><polyline points='485.4,280.5 497.8,281.9 492.8,315.3'/><polyline points='483.6,289.7 495.7,290.4'/><polyline points='481.4,306.1 492.8,307.5'/><polyline points='515.0,280.5 509.9,280.5 507.7,301.8 515.0,302.5'/><polyline points='515.0,307.5 504.9,307.2 502.8,320.3'/><polyline points='497.1,270.2 504.9,270.8'/><polyline points='511.3,270.2 510.6,273.4 515.0,273.7'/><polyline points='471.2,334.5 474.0,318.2'/><polyline points='467.2,334.5 515.0,339.5'/><polyline points='467.9,338.1 515.0,343.8'/><polyline points='437.4,345.9 450.1,339.5 454.4,335.2 462.2,336.0 460.1,355.2'/><polyline points='465.1,355.9 468.6,337.4'/><polyline points='433.1,382.0 433.8,377.9 443.0,378.6 443.8,364.4 445.9,363.7 448.7,353.7 485.7,358.7 482.9,382.0'/><polyline points='515.0,274.5 591.8,283.6 600.3,276.2 600.3,270.2'/><polyline points='515.0,281.2 591.8,290.4 598.9,299.3 598.9,301.1 603.9,302.1 602.0,310.4 619.5,312.1 618.1,327.1 601.0,325.3 602.0,310.4'/><polyline points='607.4,270.2 607.4,274.1 616.7,275.5 616.3,285.5 623.8,286.5 623.1,296.1 638.7,297.6 650.1,294.0 668.6,280.2 661.5,270.2'/><polyline points='611.7,310.4 611.7,303.2 640.1,304.9 651.5,301.8 673.6,286.5 705.0,325.3'/><polyline points='693.9,270.2 681.1,279.8 674.0,270.8 671.4,272.7 669.3,270.2'/><polyline points='682.8,287.9 705.0,314.6'/><polyline points='515.0,302.5 566.2,308.6 569.0,310.4 597.5,313.2 597.5,319.6 568.3,315.8 565.5,313.9 515.0,308.2'/><polyline points='534.2,341.6 536.3,327.4 584.7,332.4 581.8,357.6 557.7,354.4 558.4,348.0 515.0,342.8'/><polyline points='515.0,339.5 651.5,355.9 648.7,382.0'/><polyline points='515.0,372.9 517.8,361.6 554.8,366.5 552.7,382.0'/><polyline points='584.0,382.0 586.1,370.1 624.5,375.1 623.8,382.0'/><polyline points='673.6,382.0 675.7,365.5 705.0,368.7'/><polyline points='740.6,270.2 754.8,287.6 764.7,303.2 769.0,318.9 768.3,338.8 769.0,347.3 766.2,382.0'/><polyline points='747.0,270.2 759.0,285.5 769.0,301.8 774.0,318.9 775.4,338.8'/><polyline points='705.0,316.0 711.4,323.4 705.0,326.7'/><polyline points='817.4,293.3 833.7,295.4 828.7,333.8 816.6,333.1 818.8,311.1 815.2,310.4 817.4,293.3'/><polyline points='776.1,336.0 814.5,339.5 816.6,333.1'/><polyline points='828.7,333.8 834.4,335.2 833.7,339.5'/><polyline points='856.5,286.2 880.6,288.3 878.5,313.2 854.3,311.1 856.5,286.2'/><polyline points='867.1,286.2 868.5,280.5 894.1,282.2'/><polyline points='881.3,288.3 882.1,285.5 895.0,286.5'/><polyline points='870.0,313.2 869.3,320.3 883.5,322.4 884.2,309.6 877.8,308.9'/><polyline points='863.6,312.5 862.1,325.3 875.7,326.7 874.9,331.0 881.3,336.0 888.5,344.5'/><polyline points='884.2,315.3 891.3,312.5'/><polyline points='784.6,351.6 837.3,353.7 834.4,382.0'/><polyline points='784.6,351.6 781.8,377.9 807.4,380.0 834.4,382.0'/><polyline points='800.3,351.6 801.0,348.0 809.5,349.5 808.1,354.4'/><polyline points='705.0,368.0 736.3,371.5 735.6,382.0'/><polyline points='848.6,382.0 852.9,358.7 882.8,360.1 888.5,355.2 888.5,344.5'/><polyline points='862.9,357.3 861.4,367.2 876.4,369.4 877.8,358.7'/><polyline points='876.4,369.4 874.9,382.0'/><polyline points='350.6,382.0 380.5,385.1 381.2,382.0'/><polyline points='384.7,382.0 384.0,384.8 396.1,389.1 399.7,382.0'/><polyline points='349.2,407.6 392.6,411.9'/><polyline points='349.2,407.6 348.5,414.0 380.5,416.1 376.9,451.7 397.5,453.8'/><polyline points='348.5,414.0 346.3,439.6 376.2,442.4'/><polyline points='354.2,441.0 354.2,447.4 368.4,448.6 369.1,442.4'/><polyline points='411.8,423.2 515.0,436.0'/><polyline points='411.0,428.2 515.0,440.3'/><polyline points='422.4,416.1 425.3,392.7 431.7,393.4 430.2,406.9 432.4,407.6 431.0,417.6 446.6,419.7'/><polyline points='431.7,382.0 430.2,406.9'/><polyline points='446.6,419.7 445.9,426.1'/><polyline points='453.0,420.1 471.5,421.8 475.7,387.0'/><polyline points='475.7,387.0 491.4,390.5 490.7,399.1 482.9,398.4 480.7,431.1'/><polyline points='475.7,394.1 481.4,394.8 477.2,431.8'/><polyline points='492.1,424.0 494.9,399.8 499.9,400.5 499.2,411.9 501.3,412.6 503.5,386.3 515.0,387.0'/><polyline points='501.3,426.1 515.0,427.5'/><polyline points='478.6,384.1 515.0,387.7'/><polyline points='406.1,462.4 421.0,463.1 421.7,466.6 486.4,469.9 488.5,483.7'/><polyline points='442.3,468.0 440.9,493.6 406.1,491.5'/><polyline points='448.7,502.0 515.0,483.7'/><polyline points='404.6,492.9 408.9,502.0'/><polyline points='515.0,484.4 578.3,468.8 617.4,458.8 705.0,439.6'/><polyline points='515.0,440.3 614.6,451.7'/><polyline points='515.0,388.4 618.8,400.5 628.8,401.9'/><polyline points='552.0,382.0 551.3,392.2'/><polyline points='584.0,382.0 581.8,395.5'/><polyline points='623.8,382.0 621.0,400.5'/><polyline points='546.3,392.2 545.6,401.9 540.6,437.5 516.4,434.6 515.7,428.9 522.8,427.5 542.0,429.2'/><polyline points='546.3,396.9 561.2,398.4 560.5,407.6 555.5,406.9 550.6,439.6'/><polyline points='546.3,402.6 550.6,403.3 546.3,439.6'/><polyline points='572.6,394.8 569.8,434.6 592.5,436.8 593.2,435.3 610.3,437.5 616.0,400.5'/><polyline points='564.1,408.3 570.5,409.0'/><polyline points='564.1,408.3 561.2,432.5 569.0,433.2'/><polyline points='515.0,434.6 614.6,447.4'/><polyline points='616.0,411.2 618.8,411.9 614.6,447.4'/><polyline points='615.3,406.2 628.8,406.9 627.4,419.0'/><polyline points='631.6,387.0 647.3,388.4 643.7,420.4 651.5,421.8 648.7,445.3'/><polyline points='631.6,387.0 627.4,419.0'/><polyline points='674.3,382.0 670.0,423.2 705.0,427.5'/><polyline points='673.6,393.4 684.9,394.8 684.9,397.6 705.0,400.5'/><polyline points='585.4,437.5 585.4,443.2 614.6,447.4'/><polyline points='543.4,492.2 547.0,502.0'/><polyline points='583.3,490.1 705.0,502.0'/><polyline points='705.0,439.6 766.9,426.1 790.3,423.2 818.8,422.5 854.3,424.0 895.0,428.9'/><polyline points='705.0,400.5 709.3,396.2 715.7,396.9 715.7,400.5 722.1,401.2 722.8,398.4 733.4,399.8 732.7,403.3'/><polyline points='735.6,382.0 732.0,426.1'/><polyline points='763.3,382.0 759.0,421.1'/><polyline points='780.4,417.6 781.8,412.6 814.5,411.2 814.5,416.1'/><polyline points='849.3,382.0 849.3,386.3 874.2,389.1 874.9,385.6 884.9,387.0 886.3,382.0'/><polyline points='884.9,387.0 882.1,421.1'/><polyline points='721.4,451.7 723.5,455.2 722.1,463.1 711.4,464.5 708.6,483.0 713.5,485.8 747.0,485.8 746.2,487.2 793.2,490.1 794.6,480.1 799.6,453.8 775.4,451.7 774.7,462.4 743.4,459.5 742.7,465.2 722.1,463.1'/><polyline points='758.3,460.9 756.2,487.2'/><polyline points='774.7,456.0 776.1,447.4 806.7,443.2 807.4,436.8'/><polyline points='812.4,436.8 814.5,456.0 817.4,458.8 828.7,460.9'/><polyline points='823.0,436.8 823.8,450.3 830.1,453.1'/><polyline points='830.1,436.8 830.9,448.8'/><polyline points='838.7,436.8 837.3,448.8'/><polyline points='830.9,448.8 866.4,455.2 861.4,483.7 845.8,480.1 845.1,477.3 825.9,474.4 830.9,448.8'/><polyline points='887.7,449.6 895.0,450.3'/><polyline points='409.6,502.0 424.6,508.4 433.1,510.8 441.6,509.8 451.6,502.7'/><polyline points='424.6,504.1 429.5,502.7 441.6,502.7 443.8,506.3 441.6,509.8'/><polyline points='396.1,511.2 413.2,516.9 430.2,526.9 438.8,535.4 441.6,543.2'/><polyline points='378.3,618.6 381.2,602.3 411.8,571.7 448.0,568.1 454.4,562.4'/><polyline points='411.8,571.7 408.2,590.9 406.8,618.6'/><polyline points='408.2,590.9 411.8,589.0 444.5,595.9 447.3,618.6 435.9,616.5 439.5,597.3 411.0,591.6'/><polyline points='407.5,611.5 426.0,615.1 426.0,618.6'/><polyline points='447.3,618.6 450.9,593.0 455.8,584.5 460.1,580.9 468.6,582.4'/><polyline points='492.8,590.2 494.2,581.6 499.9,578.1 515.0,578.8'/><polyline points='515.0,578.8 634.5,587.3 705.0,590.9'/><polyline points='525.0,505.1 552.0,508.0 552.7,503.7 560.5,504.6 560.2,509.4 571.9,505.1 569.8,524.0 559.1,523.3 558.4,535.0 521.4,531.2 525.0,505.1'/><polyline points='559.1,527.6 579.0,529.7'/><polyline points='520.7,534.7 535.6,536.8 534.2,546.1 519.3,544.0 520.7,534.7'/><polyline points='547.0,502.0 549.1,507.7'/><polyline points='592.5,502.0 590.4,519.1 601.0,520.5 600.3,535.4 627.4,538.3 628.8,526.9 632.3,526.2 633.8,514.8 622.4,512.7 623.8,502.0'/><polyline points='607.4,502.0 606.0,511.2 619.5,512.7 619.5,503.4 607.4,502.0'/><polyline points='606.0,511.2 622.4,512.7'/><polyline points='650.8,502.0 665.7,503.4 664.3,516.9 673.6,518.4 672.9,524.0 698.5,526.9'/><polyline points='664.3,523.3 655.1,522.6 652.2,542.5 665.0,543.2 668.6,541.8 669.3,553.9 680.0,555.3 682.8,525.5'/><polyline points='573.3,593.0 577.6,591.3 584.0,592.3 588.2,598.7 584.7,603.0 583.3,617.2 574.0,617.2 571.9,614.4 573.3,593.0'/><polyline points='595.4,590.2 629.5,592.3 630.2,598.0 639.4,598.7 640.1,602.3 690.6,606.5'/><polyline points='595.4,590.2 593.9,604.4 589.0,605.1 587.5,616.5 608.9,618.6'/><polyline points='634.5,587.3 639.4,597.3'/><polyline points='640.1,597.3 673.6,598.7 672.9,618.6'/><polyline points='667.9,604.4 666.5,618.6'/><polyline points='705.0,596.6 698.5,596.6 696.3,610.1 699.9,614.4 705.0,615.1'/><polyline points='705.0,502.0 756.2,508.0 820.2,514.5'/><polyline points='710.0,528.3 705.0,527.6'/><polyline points='710.0,528.3 708.6,543.2 722.8,544.0 724.2,533.3 756.2,536.1 759.8,512.0 747.0,511.2 746.2,516.9 715.7,513.4 713.5,528.3'/><polyline points='723.5,534.0 753.4,536.8 752.6,541.1 734.2,539.7 733.4,545.4'/><polyline points='739.1,517.6 746.2,519.1'/><polyline points='773.3,513.4 774.0,516.9 822.3,516.9 823.8,544.7'/><polyline points='756.9,552.5 767.6,553.2 769.7,534.0 774.7,534.0 776.8,519.1 799.6,521.9 801.7,524.8 806.7,524.0 815.9,526.2 813.8,542.5 793.9,541.1 792.5,553.2 767.6,553.2'/><polyline points='825.9,531.9 835.1,531.9 833.7,546.1 820.9,544.7 825.9,531.9'/><polyline points='831.6,546.1 830.9,555.3 840.1,556.0 840.8,551.8 855.7,548.2 868.5,549.6 874.2,549.6 875.7,530.4 865.7,531.9 862.1,529.0 836.5,525.5 835.1,531.9'/><polyline points='867.1,549.6 867.1,557.5 874.9,557.5'/><polyline points='880.6,504.1 895.0,505.6'/><polyline points='877.8,546.1 895.0,547.5'/><polyline points='705.0,591.6 744.1,594.4 760.5,596.6 759.8,618.6'/><polyline points='744.1,594.4 743.4,604.4 760.5,605.8'/><polyline points='743.4,603.7 732.7,603.7 727.0,618.6'/><polyline points='804.6,579.5 811.7,580.2 811.7,588.8 804.6,588.0 804.6,579.5'/><polyline points='779.7,588.8 776.8,618.6'/><polyline points='895.0,558.9 884.9,567.4 895.0,578.8'/><polyline points='884.2,617.9 895.0,617.2'/><polyline points='705.0,595.9 708.6,601.6 707.1,612.9'/><circle cx='453.7' cy='313.5' r='1.2'/><circle cx='602.9' cy='287.6' r='5.7'/><circle cx='578.3' cy='468.8' r='1.2'/><circle cx='767.1' cy='426.1' r='1.2'/><circle cx='893.4' cy='428.2' r='1.2'/><circle cx='390.1' cy='507.4' r='1.2'/><ellipse cx='703' cy='605' rx='5' ry='8.5'/></g><g fill='none' stroke='#d8d8d8' stroke-width='1'><path d='M462.3,336 L460.3,355 M467.5,335.5 L465.5,355 M461.8,340 L467,340.3 M461.4,344 L466.6,344.3 M461,348 L466.2,348.3 M460.6,352 L465.8,352.3'/></g><g fill='none' stroke='#10c8d8' stroke-width='1' stroke-linejoin='round'><polyline points='372.4,270.2 370.2,294.4 449.9,302.5'/><polyline points='467.6,270.2 449.9,302.5 440.9,318.9 427.4,341.6 418.9,356.6 413.2,368.7 408.9,382.0'/><polyline points='485.4,270.2 479.3,315.3'/><polyline points='453.7,317.5 460.1,315.3 494.2,317.5 515.0,321.0'/><polyline points='453.7,317.5 448.7,324.6 437.4,345.9 431.0,357.3 423.1,372.9 419.6,382.0'/><polyline points='515.0,321.0 628.1,333.8 663.6,337.4'/><polyline points='634.2,270.2 628.1,333.8'/><polyline points='665.0,330.0 705.0,334.5'/><polyline points='665.0,330.0 663.6,337.4 657.9,382.0'/><polyline points='705.0,334.5 767.6,340.9 761.9,382.0'/><polyline points='785.8,270.2 776.1,336.0 771.8,382.0'/><polyline points='842.2,270.2 834.4,335.2'/><polyline points='849.3,270.2 895.0,276.2'/><polyline points='834.4,335.2 888.5,344.5 895.0,345.9'/><polyline points='842.9,336.0 838.0,382.0'/><polyline points='895.0,281.9 888.5,344.5 884.2,382.0'/><polyline points='333.2,390.5 393.3,398.8 404.6,399.4'/><polyline points='393.3,398.8 392.6,411.9 403.9,412.6'/><polyline points='404.6,399.4 403.9,412.6'/><polyline points='408.9,383.4 404.6,399.1 403.2,413.3 397.5,467.3 394.7,490.1 391.8,494.4 387.6,496.5 333.2,488.4'/><polyline points='419.6,382.0 413.9,407.6 410.3,431.1 406.1,462.4 404.6,492.9 408.9,498.6 438.8,498.3 515.0,478.7'/><polyline points='410.3,431.1 515.0,443.2'/><polyline points='333.2,499.3 347.8,502.0'/><polyline points='499.9,502.0 515.0,497.9'/><polyline points='515.0,442.4 617.4,453.8'/><polyline points='515.0,478.7 617.4,453.8 651.5,446.7 705.0,433.9'/><polyline points='658.6,382.0 651.5,446.7'/><polyline points='515.0,498.6 564.8,487.0 582.6,488.7'/><polyline points='584.0,482.3 608.9,483.0 705.0,492.9'/><polyline points='584.0,482.3 582.6,502.0'/><polyline points='642.3,486.5 641.6,502.0'/><polyline points='702.0,492.9 701.3,502.0'/><polyline points='705.0,454.5 608.9,476.6 607.4,481.6 610.3,483.3'/><polyline points='705.0,433.9 757.6,421.8 784.6,417.6 815.9,416.1 835.8,416.8 895.0,422.5'/><polyline points='761.9,382.0 757.6,421.8'/><polyline points='771.8,382.0 767.6,420.4'/><polyline points='838.7,382.0 835.8,416.8'/><polyline points='895.0,382.0 890.6,421.8'/><polyline points='705.0,454.5 750.5,443.9 783.2,438.2 810.2,436.8 847.2,438.2 895.0,443.2'/><polyline points='810.2,436.8 803.1,502.0'/><polyline points='887.0,442.4 880.6,502.0'/><polyline points='705.0,492.9 786.1,502.0'/><polyline points='343.5,502.0 396.1,511.2 410.3,516.2 424.6,526.2 438.8,540.4 455.8,563.2 467.2,581.6 494.2,618.6'/><polyline points='424.6,502.0 455.8,534.7 461.5,546.1 476.5,568.1 511.3,618.6'/><polyline points='400.4,515.5 402.5,618.6'/><polyline points='501.3,502.0 475.7,508.4 460.1,517.6 455.1,526.9 455.8,534.7'/><polyline points='476.5,568.1 515.0,571.0'/><polyline points='515.0,570.3 574.7,574.5 633.8,578.1 692.8,582.4 705.0,583.1'/><polyline points='582.6,502.0 574.7,574.5'/><polyline points='641.6,502.0 633.8,578.1'/><polyline points='701.3,502.0 692.8,582.4 689.9,618.6'/><polyline points='705.0,583.1 753.4,586.6 812.4,590.2 870.7,594.4'/><polyline points='761.2,502.0 753.4,586.6'/><polyline points='821.6,504.8 812.4,590.2'/><polyline points='880.6,502.0 870.7,594.4 868.5,618.6'/><polyline points='783.9,502.0 821.6,505.6 879.2,512.0'/><polyline points='878.5,522.6 895.0,523.3'/><polyline points='872.1,578.8 895.0,580.9'/><polyline points='786.1,588.0 782.5,618.6'/><polyline points='897.3,338.5 895,382'/></g><g font-family='Liberation Sans'><text x='644.5 649.4 654.3' y='351.3' fill='#dede00' font-size='9' text-anchor='middle'>548</text><text x='720.7 725.6 730.5' y='299.40000000000003' fill='#dede00' font-size='9' text-anchor='middle'>445</text><text x='709.4 713.3 718.2 722.1' y='359.2' fill='#dede00' font-size='9' text-anchor='middle'>1931</text><text x='843.5 848.4 853.2 858.1' y='327.90000000000003' fill='#dede00' font-size='9' text-anchor='middle'>2360</text><text x='392.3 396.2 401.1 406.0' y='409.5' fill='#dede00' font-size='9' text-anchor='middle'>1580</text><text x='351.8 356.6 361.5 366.4' y='465.7' fill='#dede00' font-size='9' text-anchor='middle'>2546</text><text x='449.9 453.8 458.7 463.6' y='459.3' fill='#dede00' font-size='9' text-anchor='middle'>1549</text><text x='665.9 669.8 673.7 677.6' y='479.90000000000003' fill='#dede00' font-size='9' text-anchor='middle'>1612</text><text x='855.9 859.8 863.7 867.6' y='409.5' fill='#dede00' font-size='9' text-anchor='middle'>1614</text><text x='838.1 842.0 845.9 849.8' y='497.0' fill='#dede00' font-size='9' text-anchor='middle'>1810</text><text x='490.4 494.3 499.2 504.1' y='544.4' fill='#dede00' font-size='9' text-anchor='middle'>1703</text><text x='466.2 470.1 475.0 479.9' y='617.6999999999999' fill='#dede00' font-size='9' text-anchor='middle'>1953</text><text x='600.2 604.1 609.0 613.9' y='560.0999999999999' fill='#dede00' font-size='9' text-anchor='middle'>1705</text><text x='656.3 660.2 665.1 670.0' y='568.5999999999999' fill='#dede00' font-size='9' text-anchor='middle'>1706</text><text x='552.1 557.0 561.9' y='608.4' fill='#dede00' font-size='9' text-anchor='middle'>555</text><text x='720.5 724.4 729.2 734.1' y='567.9' fill='#dede00' font-size='9' text-anchor='middle'>1707</text><text x='777.4 781.3 786.2 791.1' y='575.0' fill='#dede00' font-size='9' text-anchor='middle'>1708</text><text x='838.1 843.0 847.9' y='576.4' fill='#dede00' font-size='9' text-anchor='middle'>552</text><text x='878.6 883.5 888.4' y='560.0999999999999' fill='#dede00' font-size='9' text-anchor='middle'>550</text><text x='882.7 887.6 892.5 897.4' y='500.3' fill='#dede00' font-size='9' text-anchor='middle'>2506</text><text x='456.0' y='320.8' fill='#e07800' font-size='9' textLength='38' lengthAdjust='spacingAndGlyphs'>52563284</text><text x='581.0' y='463.5' fill='#e07800' font-size='9' textLength='38' lengthAdjust='spacingAndGlyphs'>52563692</text><text x='772.8' y='431.5' fill='#e07800' font-size='9' textLength='38' lengthAdjust='spacingAndGlyphs'>52563693</text><text x='852.4' y='432.90000000000003' fill='#e07800' font-size='9' textLength='38' lengthAdjust='spacingAndGlyphs'>52563694</text><text x='385.7' y='516.6999999999999' fill='#e07800' font-size='9' textLength='38' lengthAdjust='spacingAndGlyphs'>52563236</text><text x='403.9' y='445.5' fill='#dede00' font-size='8.5' text-anchor='middle' transform='rotate(90 403.9 442.5)'>43506</text><text x='638' y='466' fill='#dede00' font-size='8.5' text-anchor='middle' transform='rotate(-15 638 463)'>43905</text><text x='702' y='449' fill='#b4b4b4' font-size='10' text-anchor='middle' transform='rotate(-16 702 445)'>Magna  Aliqua</text><text x='435' y='344' fill='#b4b4b4' font-size='10' text-anchor='middle' transform='rotate(-61 435 341)'>Exercitation</text><text x='492' y='605' fill='#b4b4b4' font-size='10' text-anchor='middle' transform='rotate(55 492 602)'>Minim  Veniam</text><text x='730' y='504' fill='#b4b4b4' font-size='10' text-anchor='middle' transform='rotate(7 730 501)'>Laboris  Nisi</text></g></g></svg>
<div class='a' style='left:1139px;top:170px;width:14px;height:562px;background:#fafafa'></div>
<div class='a' style='left:1143px;top:317px;width:8px;height:268px;background:#7e7e7e;border-radius:4px'></div>
<div class='a' style='left:95px;top:732px;width:995px;height:15px;background:#f9f9f9'></div>
<div class='a' style='left:215px;top:735.5px;width:748px;height:8.5px;background:#7e7e7e;border-radius:4.5px'></div>
<div class='t' style='left:1090px;top:733px;font-size:13px;color:#111;width:63px;text-align:right;background:#e9e9e9'>10 &lt; 100</div>
<div class='a' style='left:105px;top:163px;width:1px;height:7px;background:#777'></div><div class='rl' style='left:85.5px;top:147px;width:40px;text-align:center'>70</div><div class='a' style='left:133px;top:163px;width:1px;height:7px;background:#777'></div><div class='rl' style='left:113.5px;top:147px;width:40px;text-align:center'>80</div><div class='a' style='left:162px;top:163px;width:1px;height:7px;background:#777'></div><div class='rl' style='left:142.5px;top:147px;width:40px;text-align:center'>90</div><div class='a' style='left:190px;top:163px;width:1px;height:7px;background:#777'></div><div class='rl' style='left:170.5px;top:147px;width:40px;text-align:center'>100</div><div class='a' style='left:219px;top:163px;width:1px;height:7px;background:#777'></div><div class='rl' style='left:199.5px;top:147px;width:40px;text-align:center'>110</div><div class='a' style='left:247px;top:163px;width:1px;height:7px;background:#777'></div><div class='rl' style='left:227.5px;top:147px;width:40px;text-align:center'>120</div><div class='a' style='left:276px;top:163px;width:1px;height:7px;background:#777'></div><div class='rl' style='left:256.5px;top:147px;width:40px;text-align:center'>130</div><div class='a' style='left:305px;top:163px;width:1px;height:7px;background:#777'></div><div class='rl' style='left:285.5px;top:147px;width:40px;text-align:center'>140</div><div class='a' style='left:333px;top:163px;width:1px;height:7px;background:#777'></div><div class='rl' style='left:313.5px;top:147px;width:40px;text-align:center'>150</div><div class='a' style='left:362px;top:163px;width:1px;height:7px;background:#777'></div><div class='rl' style='left:342.5px;top:147px;width:40px;text-align:center'>160</div><div class='a' style='left:390px;top:163px;width:1px;height:7px;background:#777'></div><div class='rl' style='left:370.5px;top:147px;width:40px;text-align:center'>170</div><div class='a' style='left:419px;top:163px;width:1px;height:7px;background:#777'></div><div class='rl' style='left:399.5px;top:147px;width:40px;text-align:center'>180</div><div class='a' style='left:447px;top:163px;width:1px;height:7px;background:#777'></div><div class='rl' style='left:427.5px;top:147px;width:40px;text-align:center'>190</div><div class='a' style='left:476px;top:163px;width:1px;height:7px;background:#777'></div><div class='rl' style='left:456.5px;top:147px;width:40px;text-align:center'>200</div><div class='a' style='left:504px;top:163px;width:1px;height:7px;background:#777'></div><div class='rl' style='left:484.5px;top:147px;width:40px;text-align:center'>210</div><div class='a' style='left:533px;top:163px;width:1px;height:7px;background:#777'></div><div class='rl' style='left:513.5px;top:147px;width:40px;text-align:center'>220</div><div class='a' style='left:561px;top:163px;width:1px;height:7px;background:#777'></div><div class='rl' style='left:541.5px;top:147px;width:40px;text-align:center'>230</div><div class='a' style='left:590px;top:163px;width:1px;height:7px;background:#777'></div><div class='rl' style='left:570.5px;top:147px;width:40px;text-align:center'>240</div><div class='a' style='left:618px;top:163px;width:1px;height:7px;background:#777'></div><div class='rl' style='left:598.5px;top:147px;width:40px;text-align:center'>250</div><div class='a' style='left:647px;top:163px;width:1px;height:7px;background:#777'></div><div class='rl' style='left:627.5px;top:147px;width:40px;text-align:center'>260</div><div class='a' style='left:675px;top:163px;width:1px;height:7px;background:#777'></div><div class='rl' style='left:655.5px;top:147px;width:40px;text-align:center'>270</div><div class='a' style='left:704px;top:163px;width:1px;height:7px;background:#777'></div><div class='rl' style='left:684.5px;top:147px;width:40px;text-align:center'>280</div><div class='a' style='left:732px;top:163px;width:1px;height:7px;background:#777'></div><div class='rl' style='left:712.5px;top:147px;width:40px;text-align:center'>290</div><div class='a' style='left:761px;top:163px;width:1px;height:7px;background:#777'></div><div class='rl' style='left:741.5px;top:147px;width:40px;text-align:center'>300</div><div class='a' style='left:790px;top:163px;width:1px;height:7px;background:#777'></div><div class='rl' style='left:770.5px;top:147px;width:40px;text-align:center'>310</div><div class='a' style='left:818px;top:163px;width:1px;height:7px;background:#777'></div><div class='rl' style='left:798.5px;top:147px;width:40px;text-align:center'>320</div><div class='a' style='left:847px;top:163px;width:1px;height:7px;background:#777'></div><div class='rl' style='left:827.5px;top:147px;width:40px;text-align:center'>330</div><div class='a' style='left:875px;top:163px;width:1px;height:7px;background:#777'></div><div class='rl' style='left:855.5px;top:147px;width:40px;text-align:center'>340</div><div class='a' style='left:904px;top:163px;width:1px;height:7px;background:#777'></div><div class='rl' style='left:884.5px;top:147px;width:40px;text-align:center'>350</div><div class='a' style='left:932px;top:163px;width:1px;height:7px;background:#777'></div><div class='rl' style='left:912.5px;top:147px;width:40px;text-align:center'>360</div><div class='a' style='left:961px;top:163px;width:1px;height:7px;background:#777'></div><div class='rl' style='left:941.5px;top:147px;width:40px;text-align:center'>370</div><div class='a' style='left:989px;top:163px;width:1px;height:7px;background:#777'></div><div class='rl' style='left:969.5px;top:147px;width:40px;text-align:center'>380</div><div class='a' style='left:1018px;top:163px;width:1px;height:7px;background:#777'></div><div class='rl' style='left:998.5px;top:147px;width:40px;text-align:center'>390</div><div class='a' style='left:1046px;top:163px;width:1px;height:7px;background:#777'></div><div class='rl' style='left:1026.5px;top:147px;width:40px;text-align:center'>400</div><div class='a' style='left:1075px;top:163px;width:1px;height:7px;background:#777'></div><div class='rl' style='left:1055.5px;top:147px;width:40px;text-align:center'>410</div><div class='a' style='left:1103px;top:163px;width:1px;height:7px;background:#777'></div><div class='rl' style='left:1083.5px;top:147px;width:40px;text-align:center'>420</div><div class='a' style='left:1132px;top:163px;width:1px;height:7px;background:#777'></div><div class='rl' style='left:1112.5px;top:147px;width:40px;text-align:center'>430</div><div class='a' style='left:88px;top:727px;width:7px;height:1px;background:#777'></div><div class='rl' style='left:57.2px;top:721px;width:40px;height:12px;text-align:center;transform:rotate(-90deg)'>90</div><div class='a' style='left:88px;top:698px;width:7px;height:1px;background:#777'></div><div class='rl' style='left:57.2px;top:692px;width:40px;height:12px;text-align:center;transform:rotate(-90deg)'>100</div><div class='a' style='left:88px;top:670px;width:7px;height:1px;background:#777'></div><div class='rl' style='left:57.2px;top:664px;width:40px;height:12px;text-align:center;transform:rotate(-90deg)'>110</div><div class='a' style='left:88px;top:641px;width:7px;height:1px;background:#777'></div><div class='rl' style='left:57.2px;top:635px;width:40px;height:12px;text-align:center;transform:rotate(-90deg)'>120</div><div class='a' style='left:88px;top:612px;width:7px;height:1px;background:#777'></div><div class='rl' style='left:57.2px;top:606px;width:40px;height:12px;text-align:center;transform:rotate(-90deg)'>130</div><div class='a' style='left:88px;top:584px;width:7px;height:1px;background:#777'></div><div class='rl' style='left:57.2px;top:578px;width:40px;height:12px;text-align:center;transform:rotate(-90deg)'>140</div><div class='a' style='left:88px;top:555px;width:7px;height:1px;background:#777'></div><div class='rl' style='left:57.2px;top:549px;width:40px;height:12px;text-align:center;transform:rotate(-90deg)'>150</div><div class='a' style='left:88px;top:527px;width:7px;height:1px;background:#777'></div><div class='rl' style='left:57.2px;top:521px;width:40px;height:12px;text-align:center;transform:rotate(-90deg)'>160</div><div class='a' style='left:88px;top:498px;width:7px;height:1px;background:#777'></div><div class='rl' style='left:57.2px;top:492px;width:40px;height:12px;text-align:center;transform:rotate(-90deg)'>170</div><div class='a' style='left:88px;top:470px;width:7px;height:1px;background:#777'></div><div class='rl' style='left:57.2px;top:464px;width:40px;height:12px;text-align:center;transform:rotate(-90deg)'>180</div><div class='a' style='left:88px;top:441px;width:7px;height:1px;background:#777'></div><div class='rl' style='left:57.2px;top:435px;width:40px;height:12px;text-align:center;transform:rotate(-90deg)'>190</div><div class='a' style='left:88px;top:413px;width:7px;height:1px;background:#777'></div><div class='rl' style='left:57.2px;top:407px;width:40px;height:12px;text-align:center;transform:rotate(-90deg)'>200</div><div class='a' style='left:88px;top:384px;width:7px;height:1px;background:#777'></div><div class='rl' style='left:57.2px;top:378px;width:40px;height:12px;text-align:center;transform:rotate(-90deg)'>210</div><div class='a' style='left:88px;top:355px;width:7px;height:1px;background:#777'></div><div class='rl' style='left:57.2px;top:349px;width:40px;height:12px;text-align:center;transform:rotate(-90deg)'>220</div><div class='a' style='left:88px;top:327px;width:7px;height:1px;background:#777'></div><div class='rl' style='left:57.2px;top:321px;width:40px;height:12px;text-align:center;transform:rotate(-90deg)'>230</div><div class='a' style='left:88px;top:298px;width:7px;height:1px;background:#777'></div><div class='rl' style='left:57.2px;top:292px;width:40px;height:12px;text-align:center;transform:rotate(-90deg)'>240</div><div class='a' style='left:88px;top:270px;width:7px;height:1px;background:#777'></div><div class='rl' style='left:57.2px;top:264px;width:40px;height:12px;text-align:center;transform:rotate(-90deg)'>250</div><div class='a' style='left:88px;top:241px;width:7px;height:1px;background:#777'></div><div class='rl' style='left:57.2px;top:235px;width:40px;height:12px;text-align:center;transform:rotate(-90deg)'>260</div><div class='a' style='left:88px;top:213px;width:7px;height:1px;background:#777'></div><div class='rl' style='left:57.2px;top:207px;width:40px;height:12px;text-align:center;transform:rotate(-90deg)'>270</div><div class='a' style='left:88px;top:184px;width:7px;height:1px;background:#777'></div><div class='rl' style='left:57.2px;top:178px;width:40px;height:12px;text-align:center;transform:rotate(-90deg)'>280</div>
<svg style='left:1040px;top:159px' width='13' height='8' viewBox='0 0 13 8'><path d='M0.5,0.5 H12.5 L6.5,7.5Z' fill='#000'/></svg>
<svg style='left:84px;top:641px' width='8' height='13' viewBox='0 0 8 13'><path d='M0.5,0.5 V12.5 L7.5,6.5Z' fill='#000'/></svg>
<div class='a' style='left:72px;top:748px;width:1081px;height:2px;background:#c4c4c4'></div>
<div class='a' style='left:73px;top:750px;width:1080px;height:21px;background:#fff;border-bottom:1px solid #c8c8c8'></div>
<div class='t' style='left:77px;top:750px;font-size:13px;color:#1e1ed6'><i>Commande:</i> layeradd</div>
<div class='a' style='left:1139px;top:751px;width:14px;height:20px;background:#f3f3f3'></div>
<div class='a' style='left:1143px;top:752px;width:7px;height:16px;background:#7e7e7e;border-radius:4px'></div>
<div class='t' style='left:73px;top:777px;font-size:13px;color:#111'>Commande :</div>
<div class='a' style='left:153px;top:776px;width:974px;height:18px;background:#fff'></div>
<div class='a' style='left:1127px;top:772.5px;width:26px;height:25px;background:linear-gradient(#e6e6e6,#f4f4f4);border:1px solid #a8a8a8'></div>
<svg style='left:1133px;top:780px' width='14' height='10' viewBox='0 0 14 10'><rect x='0.5' y='0.5' width='13' height='9' fill='#eee' stroke='#333' stroke-width='1'/><rect x='0.5' y='0.5' width='13' height='2.5' fill='#111'/><circle cx='11' cy='1.6' r='.6' fill='#888'/></svg>
<div class='a' style='left:1153px;top:123px;width:302px;height:675px;background:#ebebeb'></div>
<svg style='left:1157px;top:126px' width='14' height='14' viewBox='0 0 14 14'><circle cx='7' cy='7' r='6.8' fill='#737373'/><path d='M4.3,4.3 L9.7,9.7 M9.7,4.3 L4.3,9.7' stroke='#fff' stroke-width='1.8'/></svg><svg style='left:1175px;top:126px' width='14' height='14' viewBox='0 0 14 14'><circle cx='7' cy='7' r='6.8' fill='#737373'/><rect x='5.5' y='3.5' width='5' height='4' fill='none' stroke='#fff' stroke-width='1.1'/><rect x='3.5' y='6' width='5' height='4.5' fill='#737373' stroke='#fff' stroke-width='1.1'/></svg><div class='t' style='left:1222px;width:200px;top:127.5px;text-align:center;font-size:12px;color:#333'>Liste des calques</div><div class='a' style='left:1156px;top:145px;width:298px;height:1px;background:#d0d0d0'></div><div class='a' style='left:1155px;top:145px;width:60.8px;height:26px;border:1px solid #a8a8a8;background:linear-gradient(#f7f7f7,#ebebeb 50%,#e0e0e0)'></div><div class='a' style='left:1215px;top:145px;width:60.8px;height:26px;border:1px solid #a8a8a8;background:linear-gradient(#f7f7f7,#ebebeb 50%,#e0e0e0)'></div><div class='a' style='left:1275px;top:145px;width:60.8px;height:26px;border:1px solid #a8a8a8;background:linear-gradient(#f7f7f7,#ebebeb 50%,#e0e0e0)'></div><div class='a' style='left:1334px;top:145px;width:60.8px;height:26px;border:1px solid #a8a8a8;background:linear-gradient(#f7f7f7,#ebebeb 50%,#e0e0e0)'></div><div class='a' style='left:1394px;top:145px;width:60.8px;height:26px;border:1px solid #a8a8a8;background:linear-gradient(#f7f7f7,#ebebeb 50%,#e0e0e0)'></div><svg style='left:1177.2px;top:152.2px' width='15.5' height='11.6' viewBox='0 0 16 12'><path d='M0.6,6.3 C3,0.6 13,-0.6 15.4,5.6 C13,11.8 3,12.2 0.6,6.3Z' fill='#000'/><path d='M3.2,6.4 C5,3.4 11,3 12.9,6 C11,9.6 5,9.8 3.2,6.4Z' fill='#fff'/><circle cx='8' cy='5.6' r='2.9' fill='#000'/><circle cx='7.2' cy='4.9' r='0.7' fill='#fff' opacity='.8'/></svg><svg style='left:1237.2px;top:152.2px' width='15.5' height='11.6' viewBox='0 0 16 12'><path d='M0.6,6.3 C3,0.6 13,-0.6 15.4,5.6 C13,11.8 3,12.2 0.6,6.3Z' fill='#a8a8a8'/><path d='M3.2,6.4 C5,3.4 11,3 12.9,6 C11,9.6 5,9.8 3.2,6.4Z' fill='#eaeaea'/><circle cx='8' cy='5.6' r='2.9' fill='#a8a8a8'/><circle cx='7.2' cy='4.9' r='0.7' fill='#eaeaea' opacity='.8'/></svg><svg style='left:1297px;top:151px' width='15' height='15' viewBox='0 0 15 15'><path d='M7.5,1 V14 M1,7.5 H14' stroke='#e00000' stroke-width='3'/></svg><svg style='left:1357px;top:151px' width='15' height='15' viewBox='0 0 15 15'><path d='M1,7.5 H14' stroke='#e00000' stroke-width='3'/></svg><svg style='left:1416.0px;top:150.0px' width='16' height='16' viewBox='0 0 18 18'><path d='M2,16 L3.5,11.5 L13.5,1.5 L16.5,4.5 L6.5,14.5Z' fill='#f0a020' stroke='#8a5a10' stroke-width='0.7'/><path d='M12,3 L15,6' stroke='#e05050' stroke-width='2.2'/><path d='M2,16 L3.2,12.5 L5.5,14.8Z' fill='#333'/></svg><div class='a' style='left:1155px;top:171px;width:299px;height:388px;background:#fff;border:1px solid #cfcfcf;border-top:1px solid #b8b8b8'></div><div class='a' style='left:1181px;top:178px;width:16px;height:9px;background:#fff;border:1px solid #000;'></div><div class='t' style='left:1203px;top:174px;font-size:13px;color:#111'>0</div><svg style='left:1415.2px;top:175.8px' width='15.5' height='11.6' viewBox='0 0 16 12'><path d='M0.6,6.3 C3,0.6 13,-0.6 15.4,5.6 C13,11.8 3,12.2 0.6,6.3Z' fill='#000'/><path d='M3.2,6.4 C5,3.4 11,3 12.9,6 C11,9.6 5,9.8 3.2,6.4Z' fill='#fff'/><circle cx='8' cy='5.6' r='2.9' fill='#000'/><circle cx='7.2' cy='4.9' r='0.7' fill='#fff' opacity='.8'/></svg><svg style='left:1439.5px;top:174.5px' width='11' height='14' viewBox='0 0 11 14'><path d='M2.3,6.5 V4.6 A3.2,3.2 0 0 1 8.7,4.6 V6.5' fill='none' stroke='#b8b8b8' stroke-width='1.5'/><rect x='0.5' y='6.3' width='10' height='7.4' rx='.6' fill='#b8b8b8'/></svg><div class='a' style='left:1181px;top:198px;width:16px;height:9px;background:#000;'></div><div class='t' style='left:1203px;top:194px;font-size:13px;color:#111'>Numéros cadastraux</div><svg style='left:1415.2px;top:195.8px' width='15.5' height='11.6' viewBox='0 0 16 12'><path d='M0.6,6.3 C3,0.6 13,-0.6 15.4,5.6 C13,11.8 3,12.2 0.6,6.3Z' fill='#000'/><path d='M3.2,6.4 C5,3.4 11,3 12.9,6 C11,9.6 5,9.8 3.2,6.4Z' fill='#fff'/><circle cx='8' cy='5.6' r='2.9' fill='#000'/><circle cx='7.2' cy='4.9' r='0.7' fill='#fff' opacity='.8'/></svg><svg style='left:1439.5px;top:194.5px' width='11' height='14' viewBox='0 0 11 14'><path d='M2.3,6.5 V4.6 A3.2,3.2 0 0 1 8.7,4.6 V6.5' fill='none' stroke='#b8b8b8' stroke-width='1.5'/><rect x='0.5' y='6.3' width='10' height='7.4' rx='.6' fill='#b8b8b8'/></svg><div class='a' style='left:1156px;top:212px;width:297px;height:20px;background:#0b4fd8'></div><div class='a' style='left:1181px;top:218px;width:16px;height:9px;background:#3c4454;'></div><div class='t' style='left:1203px;top:214px;font-size:13px;color:#fff'>Points de référence</div><svg style='left:1415.2px;top:215.8px' width='15.5' height='11.6' viewBox='0 0 16 12'><path d='M0.6,6.3 C3,0.6 13,-0.6 15.4,5.6 C13,11.8 3,12.2 0.6,6.3Z' fill='#000'/><path d='M3.2,6.4 C5,3.4 11,3 12.9,6 C11,9.6 5,9.8 3.2,6.4Z' fill='#0b4fd8'/><circle cx='8' cy='5.6' r='2.9' fill='#000'/><circle cx='7.2' cy='4.9' r='0.7' fill='#0b4fd8' opacity='.8'/></svg><svg style='left:1439.5px;top:214.5px' width='11' height='14' viewBox='0 0 11 14'><path d='M2.3,6.5 V4.6 A3.2,3.2 0 0 1 8.7,4.6 V6.5' fill='none' stroke='#b8b8b8' stroke-width='1.5'/><rect x='0.5' y='6.3' width='10' height='7.4' rx='.6' fill='#b8b8b8'/></svg><div class='a' style='left:1181px;top:238px;width:16px;height:9px;background:#000;'></div><div class='t' style='left:1203px;top:234px;font-size:13px;color:#111'>Texte</div><svg style='left:1415.2px;top:235.8px' width='15.5' height='11.6' viewBox='0 0 16 12'><path d='M0.6,6.3 C3,0.6 13,-0.6 15.4,5.6 C13,11.8 3,12.2 0.6,6.3Z' fill='#000'/><path d='M3.2,6.4 C5,3.4 11,3 12.9,6 C11,9.6 5,9.8 3.2,6.4Z' fill='#fff'/><circle cx='8' cy='5.6' r='2.9' fill='#000'/><circle cx='7.2' cy='4.9' r='0.7' fill='#fff' opacity='.8'/></svg><svg style='left:1439.5px;top:234.5px' width='11' height='14' viewBox='0 0 11 14'><path d='M2.3,6.5 V4.6 A3.2,3.2 0 0 1 8.7,4.6 V6.5' fill='none' stroke='#b8b8b8' stroke-width='1.5'/><rect x='0.5' y='6.3' width='10' height='7.4' rx='.6' fill='#b8b8b8'/></svg><svg style='left:1393.5px;top:214.5px' width='15' height='15' viewBox='0 0 18 18'><path d='M2,16 L3.5,11.5 L13.5,1.5 L16.5,4.5 L6.5,14.5Z' fill='#f0a020' stroke='#8a5a10' stroke-width='0.7'/><path d='M12,3 L15,6' stroke='#e05050' stroke-width='2.2'/><path d='M2,16 L3.2,12.5 L5.5,14.8Z' fill='#333'/></svg><svg style='left:1157px;top:563px' width='14' height='14' viewBox='0 0 14 14'><circle cx='7' cy='7' r='6.8' fill='#737373'/><path d='M4.3,4.3 L9.7,9.7 M9.7,4.3 L4.3,9.7' stroke='#fff' stroke-width='1.8'/></svg><svg style='left:1175px;top:563px' width='14' height='14' viewBox='0 0 14 14'><circle cx='7' cy='7' r='6.8' fill='#737373'/><rect x='5.5' y='3.5' width='5' height='4' fill='none' stroke='#fff' stroke-width='1.1'/><rect x='3.5' y='6' width='5' height='4.5' fill='#737373' stroke='#fff' stroke-width='1.1'/></svg><div class='t' style='left:1222px;width:200px;top:563px;text-align:center;font-size:12px;color:#333'>Filtre de sélection</div><div class='a' style='left:1156px;top:579px;width:298px;height:2px;background:#d4d4d4'></div><div class='a' style='left:1167px;top:594px;width:276px;height:134px;background:#e3e3e3;border-top:1px solid #d9d9d9'></div><div class='t' style='left:1174px;top:585px;font-size:12px;color:#222'>Filtre</div><div class='t' style='left:1182px;top:617.5px;font-size:13px;color:#111'>Type :</div><div class='t' style='left:1182px;top:643px;font-size:13px;color:#111'>Propriété :</div><div class='t' style='left:1182px;top:669px;font-size:13px;color:#111'>Comparaison :</div><div class='t' style='left:1182px;top:695px;font-size:13px;color:#111'>Valeur :</div><div class='a' style='left:1278px;top:615px;width:149px;height:20.5px;background:#fff;border-radius:5.5px;box-shadow:0 0 0 1px #d0d7df'></div><div class='t' style='left:1282px;top:618px;font-size:13px;color:#111'>Texte</div><div class='a' style='left:1410px;top:617.5px;width:15px;height:15.5px;background:#1a7ff7;border-radius:4px'></div><svg style='left:1410px;top:617.5px' width='15' height='15.5' viewBox='0 0 15 16'><path d='M4.5,6 L7.5,3 L10.5,6 M4.5,10 L7.5,13 L10.5,10' fill='none' stroke='#fff' stroke-width='1.3'/></svg><div class='a' style='left:1278px;top:641px;width:149px;height:20.5px;background:#fff;border-radius:5.5px;box-shadow:0 0 0 1px #d0d7df'></div><div class='t' style='left:1282px;top:644px;font-size:13px;color:#111'>Texte</div><div class='a' style='left:1410px;top:643.5px;width:15px;height:15.5px;background:#1a7ff7;border-radius:4px'></div><svg style='left:1410px;top:643.5px' width='15' height='15.5' viewBox='0 0 15 16'><path d='M4.5,6 L7.5,3 L10.5,6 M4.5,10 L7.5,13 L10.5,10' fill='none' stroke='#fff' stroke-width='1.3'/></svg><div class='a' style='left:1278px;top:667px;width:149px;height:20.5px;background:#fff;border-radius:5.5px;box-shadow:0 0 0 1px #d0d7df'></div><div class='t' style='left:1282px;top:670px;font-size:13px;color:#111'>est</div><div class='a' style='left:1410px;top:669.5px;width:15px;height:15.5px;background:#1a7ff7;border-radius:4px'></div><svg style='left:1410px;top:669.5px' width='15' height='15.5' viewBox='0 0 15 16'><path d='M4.5,6 L7.5,3 L10.5,6 M4.5,10 L7.5,13 L10.5,10' fill='none' stroke='#fff' stroke-width='1.3'/></svg><div class='a' style='left:1277px;top:693px;width:150px;height:20px;background:#fff;border:1px solid #d0d0d0;border-bottom-color:#c0c0c0'></div><div class='a' style='left:1167px;top:744px;width:70px;height:26px;border:1px solid #a4a4a4;background:linear-gradient(#f4f4f4,#e4e4e4)'></div><div class='a' style='left:1196.0px;top:751.0px;width:12px;height:12px;background:#f58c8c;border:1px dashed #b03030'></div><div class='a' style='left:1236px;top:744px;width:70px;height:26px;border:1px solid #a4a4a4;background:linear-gradient(#f4f4f4,#e4e4e4)'></div><div class='a' style='left:1264.0px;top:750.0px;width:10px;height:10px;background:#f58c8c;border:1px solid #a04040'></div><div class='a' style='left:1268.0px;top:754.0px;width:10px;height:10px;background:#f58c8c;border:1px dashed #a04040'></div><div class='a' style='left:1305px;top:744px;width:70px;height:26px;border:1px solid #a4a4a4;background:linear-gradient(#f4f4f4,#e4e4e4)'></div><div class='a' style='left:1333.0px;top:750.0px;width:10px;height:10px;background:#f58c8c;border:1px solid #a04040'></div><div class='a' style='left:1337.0px;top:754.0px;width:10px;height:10px;background:#fff;border:1px dashed #777'></div><div class='a' style='left:1374px;top:744px;width:70px;height:26px;border:1px solid #a4a4a4;background:linear-gradient(#f4f4f4,#e4e4e4)'></div><div class='a' style='left:1402.0px;top:750.0px;width:10px;height:10px;background:#fff;border:1px solid #777'></div><div class='a' style='left:1406.0px;top:754.0px;width:10px;height:10px;border:1px dashed #777'></div><div class='a' style='left:1406.0px;top:754.0px;width:6px;height:6px;background:#f58c8c'></div><svg style='left:1310px;top:609px' width='84' height='84' viewBox='0 0 84 84'><defs><radialGradient id='rg' cx='42' cy='42' r='41' gradientUnits='userSpaceOnUse'><stop offset='0' stop-color='#fff' stop-opacity='.45'/><stop offset='.72' stop-color='#fff' stop-opacity='.6'/><stop offset='.8' stop-color='#fff' stop-opacity='.85'/><stop offset='.86' stop-color='#b8c8d8' stop-opacity='.6'/><stop offset='.9' stop-color='#9fb3c8' stop-opacity='.75'/><stop offset='.94' stop-color='#a8bccf' stop-opacity='.65'/><stop offset='.97' stop-color='#9fb3c8' stop-opacity='.7'/><stop offset='1' stop-color='#b8c8d8' stop-opacity='0'/></radialGradient></defs><circle cx='42' cy='42' r='41' fill='url(#rg)'/></svg><svg style='left:1350px;top:649.7px' width='20' height='30' viewBox='0 0 20 30'><path d='M2,2 L2,22.6 L7.5,18.4 L11.5,27.6 L14.8,26.2 L11,17.5 L17.6,16.4 Z' fill='#fff' stroke='#000' stroke-width='1.2' stroke-linejoin='round'/></svg>
<div class='a' style='left:1455px;top:123px;width:45px;height:675px;background:linear-gradient(90deg,#f4f4f4,#e8e8e8 15%,#d6d6d6 75%,#c6c6c6 95%,#b4b4b4);border-left:1px solid #dcdcdc'></div>
<div class='hdlh' style='left:1464px;top:131px;width:30px'></div><div class='chk' style='left:1456.5px;top:135px;width:44px;height:43px;border-radius:6px 0 0 6px'></div><div class='chk' style='left:1456.5px;top:330px;width:44px;height:43px;border-radius:6px 0 0 6px'></div><div class='chk' style='left:1456.5px;top:433px;width:44px;height:42px;border-radius:6px 0 0 6px'></div><svg style='left:1463px;top:142px' width='29' height='29' viewBox='0 0 29 29'><rect x='0.5' y='0.5' width='28' height='27.5' fill='#fff' stroke='#222' stroke-width='1'/><rect x='0.5' y='0.5' width='28' height='4.5' fill='#000'/><rect x='1.8' y='1.5' width='2.6' height='2.6' fill='#fff'/><path d='M8,11 L12,9 L12,22 L8,24Z' fill='#777'/><path d='M11,10 L21,7 L21,20 L11,23Z' fill='#f8f8f8' stroke='#444' stroke-width='.7'/><path d='M13,20 L18,12 L19,19Z' fill='none' stroke='#e03030' stroke-width='.9'/></svg><svg style='left:1463px;top:189px' width='29' height='29' viewBox='0 0 29 29'><rect x='0.5' y='0.5' width='28' height='27.5' fill='#fff' stroke='#222' stroke-width='1'/><rect x='0.5' y='0.5' width='28' height='4.5' fill='#000'/><rect x='1.8' y='1.5' width='2.6' height='2.6' fill='#fff'/><rect x='7' y='9.5' width='10' height='8' fill='#efe4b8' stroke='#333' stroke-width='.7'/><circle cx='17.5' cy='17' r='5' fill='#efe4b8' fill-opacity='.85' stroke='#333' stroke-width='.7'/></svg><svg style='left:1463px;top:235px' width='29' height='29' viewBox='0 0 29 29'><rect x='0.5' y='0.5' width='28' height='27.5' fill='#fff' stroke='#222' stroke-width='1'/><rect x='0.5' y='0.5' width='28' height='4.5' fill='#000'/><rect x='1.8' y='1.5' width='2.6' height='2.6' fill='#fff'/><rect x='5.5' y='10' width='18' height='12.5' rx='2.5' fill='#f4f4f4' stroke='#bcd0e8' stroke-width='1'/></svg><div class='seph' style='left:1457px;top:276px;width:43px'></div><svg style='left:1463px;top:291px' width='29' height='29' viewBox='0 0 29 29'><rect x='0.5' y='0.5' width='28' height='27.5' fill='#fff' stroke='#222' stroke-width='1'/><rect x='0.5' y='0.5' width='28' height='4.5' fill='#000'/><rect x='1.8' y='1.5' width='2.6' height='2.6' fill='#fff'/><rect x='5' y='9' width='3.5' height='3' fill='#000'/><rect x='5' y='15' width='3.5' height='3' fill='#000'/><rect x='5' y='21' width='3.5' height='3' fill='#000'/><rect x='11' y='8.5' width='13' height='3.5' fill='none' stroke='#222' stroke-width='.8'/><rect x='11' y='14.5' width='13' height='3.5' fill='none' stroke='#222' stroke-width='.8'/><rect x='11' y='20.5' width='13' height='3.5' fill='none' stroke='#222' stroke-width='.8'/></svg><svg style='left:1463px;top:337px' width='29' height='29' viewBox='0 0 29 29'><rect x='0.5' y='0.5' width='28' height='27.5' fill='#fff' stroke='#222' stroke-width='1'/><rect x='0.5' y='0.5' width='28' height='4.5' fill='#000'/><rect x='1.8' y='1.5' width='2.6' height='2.6' fill='#fff'/><path d='M6.5,10 Q14.5,7 22.5,10 L16,18 V24 L13,26 V18 Z' fill='#c8c8c8' stroke='#444' stroke-width='.8'/><ellipse cx='14.5' cy='10' rx='8' ry='2' fill='#8a8a8a'/></svg><svg style='left:1463px;top:384px' width='29' height='29' viewBox='0 0 29 29'><rect x='0.5' y='0.5' width='28' height='27.5' fill='#fff' stroke='#222' stroke-width='1'/><rect x='0.5' y='0.5' width='28' height='4.5' fill='#000'/><rect x='1.8' y='1.5' width='2.6' height='2.6' fill='#fff'/><path d='M7,9 L14,13 V18 L7,22Z' fill='#fafafa' stroke='#333' stroke-width='.8'/><rect x='14' y='12.5' width='8' height='6.5' fill='#9a9a9a' stroke='#555' stroke-width='.6'/><path d='M4,15.5 H25' stroke='#e88' stroke-width='.8' stroke-dasharray='1.5,1'/></svg><div class='seph' style='left:1457px;top:425px;width:43px'></div><svg style='left:1463px;top:440px' width='29' height='29' viewBox='0 0 29 29'><rect x='0.5' y='0.5' width='28' height='27.5' fill='#fff' stroke='#222' stroke-width='1'/><rect x='0.5' y='0.5' width='28' height='4.5' fill='#000'/><rect x='1.8' y='1.5' width='2.6' height='2.6' fill='#fff'/><path d='M3,8 H14 M3,11.5 H13 M3,15 H15 M3,18.5 H15' stroke='#aaa' stroke-width='.8'/><path d='M1,22.5 H28' stroke='#222' stroke-width='.8'/><path d='M4,25.5 H7 M12,25.5 H25' stroke='#666' stroke-width='.8'/></svg><svg style='left:1463px;top:487px' width='29' height='29' viewBox='0 0 29 29'><rect x='0.5' y='0.5' width='28' height='27.5' fill='#fff' stroke='#222' stroke-width='1'/><rect x='0.5' y='0.5' width='28' height='4.5' fill='#000'/><rect x='1.8' y='1.5' width='2.6' height='2.6' fill='#fff'/><rect x='8' y='9.5' width='13' height='15' rx='1' fill='#c98a2a'/><rect x='9.5' y='11' width='10' height='12' fill='#f4f4f4'/><rect x='11.5' y='8.5' width='6' height='3' fill='#999'/><path d='M11,15 H18 M11,17.5 H18 M11,20 H16' stroke='#bbb' stroke-width='.6'/></svg><div class='seph' style='left:1457px;top:528px;width:43px'></div><svg style='left:1462px;top:547px' width='32' height='21' viewBox='0 0 32 21'><path d='M2,2.5 H10 Q13,2.5 13,5.5 V7.5 Q13,10 10,10 H5 M10,10 Q13,10 13,12.8 V15.5 Q13,18.5 10,18.5 H2' fill='none' stroke='#111' stroke-width='1.7'/><path d='M17.5,2.5 H24 Q28.5,2.5 28.5,7 V14 Q28.5,18.5 24,18.5 H17.5 Z' fill='none' stroke='#111' stroke-width='1.7'/></svg>
<div class='a' style='left:0;top:798px;width:1500px;height:46px;background:#dbdbdb'></div>
<div class='t' style='left:2px;top:807px;font-size:10.3px;color:#111'>399.6922,118.0057</div>
<div class='t' style='left:2px;top:827px;font-size:10.3px;color:#111'>@399.6922,118.0057</div>
<div class='a' style='left:253px;top:802px;width:1px;height:40px;background:#777'></div>
<div class='t' style='left:256px;top:807px;font-size:10.3px;color:#111'>416.7484&lt;16°</div>
<div class='t' style='left:256px;top:827px;font-size:10.3px;color:#111'>@416.7484&lt;16°</div>
<div class='a' style='left:506px;top:819px;width:7px;height:7px;border-radius:50%;background:#c4c4c4'></div>
<div class='t' style='left:532px;top:816px;font-size:10.3px;color:#111'>Sélectionne une entité ou une région</div>
<div class='a' style='left:939px;top:819px;width:7px;height:7px;border-radius:50%;background:#c4c4c4'></div>
<svg style='left:716px;top:805px' width='20' height='32' viewBox='0 0 20 32'><path d='M1.2,9 Q1.2,1 10,1 Q18.8,1 18.8,9 V23 Q18.8,30.7 10,30.7 Q1.2,30.7 1.2,23Z' fill='#fff' stroke='#444' stroke-width='.8'/><path d='M1.2,15 Q10,12.5 18.8,15' fill='none' stroke='#333' stroke-width='1.1'/><path d='M10,1.2 V14' stroke='#333' stroke-width='.9'/><rect x='8.2' y='3.5' width='3.6' height='7.2' rx='1.6' fill='#fff' stroke='#333' stroke-width='.8'/></svg>
<div class='t' style='left:949px;top:816px;font-size:10.3px;color:#111'>Aucune des entités sélectionnées.</div>
<div class='a' style='left:1268px;top:819px;width:7px;height:7px;border-radius:50%;background:#c4c4c4'></div>
</body></html>
